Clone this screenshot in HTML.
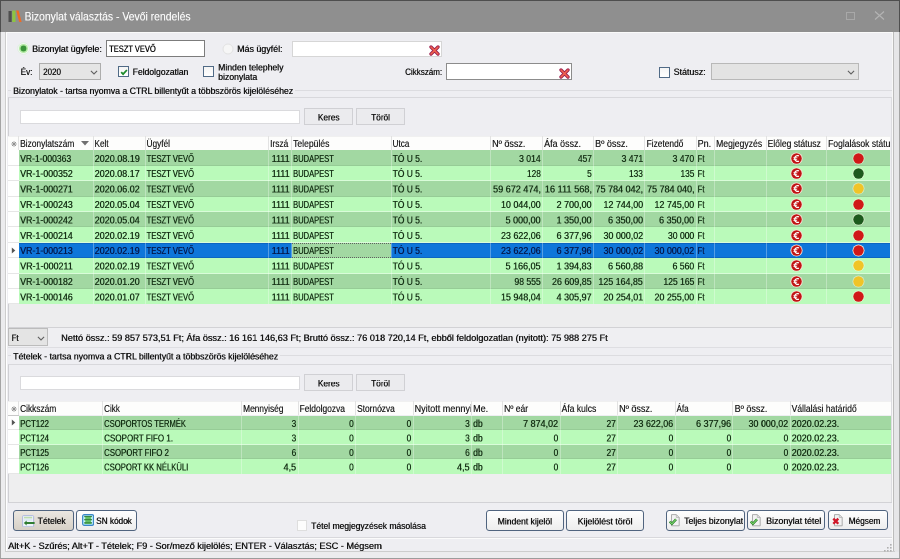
<!DOCTYPE html><html><head><meta charset="utf-8"><style>
*{box-sizing:border-box;margin:0;padding:0}
html,body{width:900px;height:559px;overflow:hidden;background:#eeeef2;font-family:"Liberation Sans", sans-serif;color:#161616}
.ab{position:absolute}
.t{position:absolute;white-space:pre;line-height:1;text-shadow:0.85px 0 0 currentColor}
.cl{position:absolute;overflow:hidden}
</style></head><body>
<div class="ab" style="left:0px;top:0px;width:900px;height:559px;background:#ececee;border:1px solid #a4a4a4;border-top:none"></div>
<div class="ab" style="left:5px;top:32px;width:1px;height:520px;background:#cdcdcd"></div>
<div class="ab" style="left:893px;top:32px;width:1px;height:520px;background:#bcbcbc"></div>
<div class="ab" style="left:894px;top:32px;width:5px;height:520px;background:#e6e6e8"></div>
<div class="ab" style="left:5px;top:551px;width:890px;height:1px;background:#cdcdcd"></div>
<div class="ab" style="left:0px;top:558px;width:900px;height:1px;background:#9c9c9c"></div>
<div class="ab" style="left:0px;top:0px;width:900px;height:32px;background:#8f8f8f;border-top:1px solid #4e4e4e;border-left:1px solid #4e4e4e;border-right:1px solid #4e4e4e"></div>
<svg class="ab" style="left:8px;top:10px" width="14" height="13" viewBox="0 0 14 13"><rect x="0.5" y="1" width="3.2" height="11" fill="#4f4f4f"/><rect x="4.3" y="0.5" width="3.2" height="11.5" fill="#8dc63f"/><path d="M8.2 0.5 L10.6 0.5 L13.6 12 L11.2 12 Z" fill="#f26a22"/></svg>
<div class="ab" style="left:846px;top:11.7px;width:9.2px;height:8.2px;border:1px solid #a8a8a8"></div>
<svg class="ab" style="left:873.5px;top:11px" width="11" height="9" viewBox="0 0 11 9"><path d="M1 0.5L10 8.5M10 0.5L1 8.5" stroke="#b4b4b4" stroke-width="1.1"/></svg>
<div class="ab" style="left:6px;top:32px;width:887px;height:519px;background:#eeeef2;border-top:1px solid #fafafa;border-left:1px solid #fff;border-right:1px solid #f8f8f8"></div>
<svg class="ab" style="left:16.5px;top:41.6px" width="13" height="13" viewBox="0 0 13 13"><circle cx="6.5" cy="6.5" r="5.8" fill="#f2f8f2" stroke="#dcefdc" stroke-width="0.8"/><circle cx="6.5" cy="6.5" r="4.5" fill="#b2eaa2"/><circle cx="6.5" cy="6.5" r="2.9" fill="#3a943a"/></svg>
<div class="ab" style="left:106px;top:40px;width:99px;height:17px;background:#fff;border:1px solid #7c7c7c"></div>
<svg class="ab" style="left:222.2px;top:42.9px" width="12" height="12" viewBox="0 0 12 12"><circle cx="6" cy="6" r="5" fill="#f6f6f6" stroke="#e2e2e2" stroke-width="1"/></svg>
<div class="ab" style="left:292.4px;top:40.8px;width:149.2px;height:16.7px;background:#fff;border:1px solid #d6d6d6"></div>
<svg class="ab" style="left:428.8px;top:44.6px" width="11" height="11" viewBox="0 0 11 11"><path d="M2 2L9 9M9 2L2 9" stroke="#9a1e50" stroke-width="3.3" stroke-linecap="round"/><path d="M2 2L9 9M9 2L2 9" stroke="#f2644c" stroke-width="1.6" stroke-linecap="round"/></svg>
<div class="ab" style="left:39px;top:63.2px;width:62px;height:17px;background:#e5e5e5;border:1px solid #adadad"></div>
<svg class="ab" style="left:90.2px;top:70px" width="8" height="5" viewBox="0 0 8 5"><path d="M0.9 0.8L4 3.9L7.1 0.8" fill="none" stroke="#606060" stroke-width="1.05"/></svg>
<div class="ab" style="left:118.2px;top:66.3px;width:10.6px;height:10.6px;background:linear-gradient(#f4f4f4,#ffffff);border:1.2px solid #506a86"></div>
<svg class="ab" style="left:119.8px;top:68.1px" width="8" height="8" viewBox="0 0 8 8"><path d="M1.2 4.2L3.1 6.1L6.9 2" fill="none" stroke="#1e8c2c" stroke-width="1.8"/></svg>
<div class="ab" style="left:203.3px;top:66.3px;width:10.6px;height:10.6px;background:linear-gradient(#f4f4f4,#ffffff);border:1.2px solid #506a86"></div>
<div class="ab" style="left:446px;top:63.4px;width:125.8px;height:16.4px;background:#fff;border:1px solid #8c8c8c"></div>
<svg class="ab" style="left:558.5px;top:67.8px" width="11" height="11" viewBox="0 0 11 11"><path d="M2 2L9 9M9 2L2 9" stroke="#9a1e50" stroke-width="3.3" stroke-linecap="round"/><path d="M2 2L9 9M9 2L2 9" stroke="#f2644c" stroke-width="1.6" stroke-linecap="round"/></svg>
<div class="ab" style="left:659px;top:67px;width:10.6px;height:10.6px;background:linear-gradient(#f4f4f4,#ffffff);border:1.2px solid #506a86"></div>
<div class="ab" style="left:711px;top:63.3px;width:147.8px;height:16.8px;background:#e3e3e3;border:1px solid #b8b8b8"></div>
<svg class="ab" style="left:847px;top:70.2px" width="8" height="5" viewBox="0 0 8 5"><path d="M0.9 0.8L4 3.9L7.1 0.8" fill="none" stroke="#606060" stroke-width="1.05"/></svg>
<div class="ab" style="left:7.5px;top:96.5px;width:884px;height:231px;border-top:1px solid #d8d8dc;border-left:1px solid #cfcfd3;border-right:1px solid #dcdce0"></div>
<div class="ab" style="left:294.5px;top:90px;width:597.5px;height:1px;background:#dcdce0"></div>
<div class="ab" style="left:8px;top:90px;width:3px;height:1px;background:#dcdce0"></div>
<div class="ab" style="left:19.5px;top:109.6px;width:280px;height:14.9px;background:#fff;border:1px solid #dadadd"></div>
<div class="ab" style="left:304.2px;top:108.2px;width:48.4px;height:17.1px;background:#ebebee;border:1px solid #d0d0d4"></div>
<div class="ab" style="left:356.2px;top:108.2px;width:48.7px;height:17.1px;background:#ebebee;border:1px solid #d0d0d4"></div>
<div class="ab" style="left:8px;top:135.5px;width:882px;height:14.900000000000006px;background:#fdfdfc;border-top:1px solid #f0f0f0"></div>
<div class="ab" style="left:18.0px;top:135.5px;width:1px;height:14.900000000000006px;background:#e2e2e2"></div>
<div class="ab" style="left:92.5px;top:135.5px;width:1px;height:14.900000000000006px;background:#e2e2e2"></div>
<div class="ab" style="left:144.5px;top:135.5px;width:1px;height:14.900000000000006px;background:#e2e2e2"></div>
<div class="ab" style="left:267.8px;top:135.5px;width:1px;height:14.900000000000006px;background:#e2e2e2"></div>
<div class="ab" style="left:291.0px;top:135.5px;width:1px;height:14.900000000000006px;background:#e2e2e2"></div>
<div class="ab" style="left:390.5px;top:135.5px;width:1px;height:14.900000000000006px;background:#e2e2e2"></div>
<div class="ab" style="left:490.0px;top:135.5px;width:1px;height:14.900000000000006px;background:#e2e2e2"></div>
<div class="ab" style="left:542.0px;top:135.5px;width:1px;height:14.900000000000006px;background:#e2e2e2"></div>
<div class="ab" style="left:593.0px;top:135.5px;width:1px;height:14.900000000000006px;background:#e2e2e2"></div>
<div class="ab" style="left:644.2px;top:135.5px;width:1px;height:14.900000000000006px;background:#e2e2e2"></div>
<div class="ab" style="left:695.5px;top:135.5px;width:1px;height:14.900000000000006px;background:#e2e2e2"></div>
<div class="ab" style="left:714.0px;top:135.5px;width:1px;height:14.900000000000006px;background:#e2e2e2"></div>
<div class="ab" style="left:765.5px;top:135.5px;width:1px;height:14.900000000000006px;background:#e2e2e2"></div>
<div class="ab" style="left:826.0px;top:135.5px;width:1px;height:14.900000000000006px;background:#e2e2e2"></div>
<svg class="ab" style="left:10.5px;top:140.5px" width="6" height="6" viewBox="0 0 6 6"><g stroke="#8c8c8c" stroke-width="0.9"><path d="M3 0.3V5.7M0.3 3H5.7M1 1L5 5M5 1L1 5"/></g></svg>
<div class="ab" style="left:8px;top:149.9px;width:10.5px;height:1px;background:#c8c8c8"></div>
<svg class="ab" style="left:81px;top:141px" width="8" height="5" viewBox="0 0 8 5"><path d="M0 0L8 0L4 4.5Z" fill="#707070"/></svg>
<div class="ab" style="left:8px;top:150.4px;width:10.5px;height:15.4px;background:#fff;border-bottom:1px solid #e6e6e6"></div>
<div class="ab" style="left:18.5px;top:150.4px;width:871.5px;height:15.4px;background:#a2d8a2"></div>
<div class="ab" style="left:18.5px;top:164.8px;width:871.5px;height:1px;background:rgba(0,50,0,0.07)"></div>
<div class="ab" style="left:92.5px;top:150.4px;width:1px;height:15.4px;background:rgba(255,255,255,0.3)"></div>
<div class="ab" style="left:144.5px;top:150.4px;width:1px;height:15.4px;background:rgba(255,255,255,0.3)"></div>
<div class="ab" style="left:267.8px;top:150.4px;width:1px;height:15.4px;background:rgba(255,255,255,0.3)"></div>
<div class="ab" style="left:291.0px;top:150.4px;width:1px;height:15.4px;background:rgba(255,255,255,0.3)"></div>
<div class="ab" style="left:390.5px;top:150.4px;width:1px;height:15.4px;background:rgba(255,255,255,0.3)"></div>
<div class="ab" style="left:490.0px;top:150.4px;width:1px;height:15.4px;background:rgba(255,255,255,0.3)"></div>
<div class="ab" style="left:542.0px;top:150.4px;width:1px;height:15.4px;background:rgba(255,255,255,0.3)"></div>
<div class="ab" style="left:593.0px;top:150.4px;width:1px;height:15.4px;background:rgba(255,255,255,0.3)"></div>
<div class="ab" style="left:644.2px;top:150.4px;width:1px;height:15.4px;background:rgba(255,255,255,0.3)"></div>
<div class="ab" style="left:695.5px;top:150.4px;width:1px;height:15.4px;background:rgba(255,255,255,0.3)"></div>
<div class="ab" style="left:714.0px;top:150.4px;width:1px;height:15.4px;background:rgba(255,255,255,0.3)"></div>
<div class="ab" style="left:765.5px;top:150.4px;width:1px;height:15.4px;background:rgba(255,255,255,0.3)"></div>
<div class="ab" style="left:826.0px;top:150.4px;width:1px;height:15.4px;background:rgba(255,255,255,0.3)"></div>
<svg class="ab" style="left:789.5px;top:151.6px" width="13" height="13" viewBox="0 0 13 13"><circle cx="6.5" cy="6.5" r="6.1" fill="#f6e2d6"/><circle cx="6.5" cy="6.5" r="5.2" fill="#c01414"/><path d="M8.9 3.9A2.9 2.9 0 1 0 8.9 9.1" fill="none" stroke="#fff" stroke-width="1.3"/><path d="M3.4 5.7H7.4M3.4 7.4H7.1" stroke="#fff" stroke-width="0.8"/></svg>
<svg class="ab" style="left:852.0px;top:151.6px" width="13" height="13" viewBox="0 0 13 13"><circle cx="6.5" cy="6.5" r="6" fill="rgba(255,250,230,0.55)"/><circle cx="6.5" cy="6.5" r="5.2" fill="#d01818"/></svg>
<div class="ab" style="left:8px;top:165.8px;width:10.5px;height:15.4px;background:#fff;border-bottom:1px solid #e6e6e6"></div>
<div class="ab" style="left:18.5px;top:165.8px;width:871.5px;height:15.4px;background:#bafaba"></div>
<div class="ab" style="left:18.5px;top:180.20000000000002px;width:871.5px;height:1px;background:rgba(255,255,255,0.45)"></div>
<div class="ab" style="left:92.5px;top:165.8px;width:1px;height:15.4px;background:rgba(255,255,255,0.3)"></div>
<div class="ab" style="left:144.5px;top:165.8px;width:1px;height:15.4px;background:rgba(255,255,255,0.3)"></div>
<div class="ab" style="left:267.8px;top:165.8px;width:1px;height:15.4px;background:rgba(255,255,255,0.3)"></div>
<div class="ab" style="left:291.0px;top:165.8px;width:1px;height:15.4px;background:rgba(255,255,255,0.3)"></div>
<div class="ab" style="left:390.5px;top:165.8px;width:1px;height:15.4px;background:rgba(255,255,255,0.3)"></div>
<div class="ab" style="left:490.0px;top:165.8px;width:1px;height:15.4px;background:rgba(255,255,255,0.3)"></div>
<div class="ab" style="left:542.0px;top:165.8px;width:1px;height:15.4px;background:rgba(255,255,255,0.3)"></div>
<div class="ab" style="left:593.0px;top:165.8px;width:1px;height:15.4px;background:rgba(255,255,255,0.3)"></div>
<div class="ab" style="left:644.2px;top:165.8px;width:1px;height:15.4px;background:rgba(255,255,255,0.3)"></div>
<div class="ab" style="left:695.5px;top:165.8px;width:1px;height:15.4px;background:rgba(255,255,255,0.3)"></div>
<div class="ab" style="left:714.0px;top:165.8px;width:1px;height:15.4px;background:rgba(255,255,255,0.3)"></div>
<div class="ab" style="left:765.5px;top:165.8px;width:1px;height:15.4px;background:rgba(255,255,255,0.3)"></div>
<div class="ab" style="left:826.0px;top:165.8px;width:1px;height:15.4px;background:rgba(255,255,255,0.3)"></div>
<svg class="ab" style="left:789.5px;top:167.0px" width="13" height="13" viewBox="0 0 13 13"><circle cx="6.5" cy="6.5" r="6.1" fill="#f6e2d6"/><circle cx="6.5" cy="6.5" r="5.2" fill="#c01414"/><path d="M8.9 3.9A2.9 2.9 0 1 0 8.9 9.1" fill="none" stroke="#fff" stroke-width="1.3"/><path d="M3.4 5.7H7.4M3.4 7.4H7.1" stroke="#fff" stroke-width="0.8"/></svg>
<svg class="ab" style="left:852.0px;top:167.0px" width="13" height="13" viewBox="0 0 13 13"><circle cx="6.5" cy="6.5" r="6" fill="rgba(255,250,230,0.55)"/><circle cx="6.5" cy="6.5" r="5.2" fill="#1d5a1d"/></svg>
<div class="ab" style="left:8px;top:181.20000000000002px;width:10.5px;height:15.4px;background:#fff;border-bottom:1px solid #e6e6e6"></div>
<div class="ab" style="left:18.5px;top:181.20000000000002px;width:871.5px;height:15.4px;background:#a2d8a2"></div>
<div class="ab" style="left:18.5px;top:195.60000000000002px;width:871.5px;height:1px;background:rgba(0,50,0,0.07)"></div>
<div class="ab" style="left:92.5px;top:181.20000000000002px;width:1px;height:15.4px;background:rgba(255,255,255,0.3)"></div>
<div class="ab" style="left:144.5px;top:181.20000000000002px;width:1px;height:15.4px;background:rgba(255,255,255,0.3)"></div>
<div class="ab" style="left:267.8px;top:181.20000000000002px;width:1px;height:15.4px;background:rgba(255,255,255,0.3)"></div>
<div class="ab" style="left:291.0px;top:181.20000000000002px;width:1px;height:15.4px;background:rgba(255,255,255,0.3)"></div>
<div class="ab" style="left:390.5px;top:181.20000000000002px;width:1px;height:15.4px;background:rgba(255,255,255,0.3)"></div>
<div class="ab" style="left:490.0px;top:181.20000000000002px;width:1px;height:15.4px;background:rgba(255,255,255,0.3)"></div>
<div class="ab" style="left:542.0px;top:181.20000000000002px;width:1px;height:15.4px;background:rgba(255,255,255,0.3)"></div>
<div class="ab" style="left:593.0px;top:181.20000000000002px;width:1px;height:15.4px;background:rgba(255,255,255,0.3)"></div>
<div class="ab" style="left:644.2px;top:181.20000000000002px;width:1px;height:15.4px;background:rgba(255,255,255,0.3)"></div>
<div class="ab" style="left:695.5px;top:181.20000000000002px;width:1px;height:15.4px;background:rgba(255,255,255,0.3)"></div>
<div class="ab" style="left:714.0px;top:181.20000000000002px;width:1px;height:15.4px;background:rgba(255,255,255,0.3)"></div>
<div class="ab" style="left:765.5px;top:181.20000000000002px;width:1px;height:15.4px;background:rgba(255,255,255,0.3)"></div>
<div class="ab" style="left:826.0px;top:181.20000000000002px;width:1px;height:15.4px;background:rgba(255,255,255,0.3)"></div>
<svg class="ab" style="left:789.5px;top:182.4px" width="13" height="13" viewBox="0 0 13 13"><circle cx="6.5" cy="6.5" r="6.1" fill="#f6e2d6"/><circle cx="6.5" cy="6.5" r="5.2" fill="#c01414"/><path d="M8.9 3.9A2.9 2.9 0 1 0 8.9 9.1" fill="none" stroke="#fff" stroke-width="1.3"/><path d="M3.4 5.7H7.4M3.4 7.4H7.1" stroke="#fff" stroke-width="0.8"/></svg>
<svg class="ab" style="left:852.0px;top:182.4px" width="13" height="13" viewBox="0 0 13 13"><circle cx="6.5" cy="6.5" r="6" fill="rgba(255,250,230,0.55)"/><circle cx="6.5" cy="6.5" r="5.2" fill="#f0c428"/></svg>
<div class="ab" style="left:8px;top:196.60000000000002px;width:10.5px;height:15.4px;background:#fff;border-bottom:1px solid #e6e6e6"></div>
<div class="ab" style="left:18.5px;top:196.60000000000002px;width:871.5px;height:15.4px;background:#bafaba"></div>
<div class="ab" style="left:18.5px;top:211.00000000000003px;width:871.5px;height:1px;background:rgba(255,255,255,0.45)"></div>
<div class="ab" style="left:92.5px;top:196.60000000000002px;width:1px;height:15.4px;background:rgba(255,255,255,0.3)"></div>
<div class="ab" style="left:144.5px;top:196.60000000000002px;width:1px;height:15.4px;background:rgba(255,255,255,0.3)"></div>
<div class="ab" style="left:267.8px;top:196.60000000000002px;width:1px;height:15.4px;background:rgba(255,255,255,0.3)"></div>
<div class="ab" style="left:291.0px;top:196.60000000000002px;width:1px;height:15.4px;background:rgba(255,255,255,0.3)"></div>
<div class="ab" style="left:390.5px;top:196.60000000000002px;width:1px;height:15.4px;background:rgba(255,255,255,0.3)"></div>
<div class="ab" style="left:490.0px;top:196.60000000000002px;width:1px;height:15.4px;background:rgba(255,255,255,0.3)"></div>
<div class="ab" style="left:542.0px;top:196.60000000000002px;width:1px;height:15.4px;background:rgba(255,255,255,0.3)"></div>
<div class="ab" style="left:593.0px;top:196.60000000000002px;width:1px;height:15.4px;background:rgba(255,255,255,0.3)"></div>
<div class="ab" style="left:644.2px;top:196.60000000000002px;width:1px;height:15.4px;background:rgba(255,255,255,0.3)"></div>
<div class="ab" style="left:695.5px;top:196.60000000000002px;width:1px;height:15.4px;background:rgba(255,255,255,0.3)"></div>
<div class="ab" style="left:714.0px;top:196.60000000000002px;width:1px;height:15.4px;background:rgba(255,255,255,0.3)"></div>
<div class="ab" style="left:765.5px;top:196.60000000000002px;width:1px;height:15.4px;background:rgba(255,255,255,0.3)"></div>
<div class="ab" style="left:826.0px;top:196.60000000000002px;width:1px;height:15.4px;background:rgba(255,255,255,0.3)"></div>
<svg class="ab" style="left:789.5px;top:197.8px" width="13" height="13" viewBox="0 0 13 13"><circle cx="6.5" cy="6.5" r="6.1" fill="#f6e2d6"/><circle cx="6.5" cy="6.5" r="5.2" fill="#c01414"/><path d="M8.9 3.9A2.9 2.9 0 1 0 8.9 9.1" fill="none" stroke="#fff" stroke-width="1.3"/><path d="M3.4 5.7H7.4M3.4 7.4H7.1" stroke="#fff" stroke-width="0.8"/></svg>
<svg class="ab" style="left:852.0px;top:197.8px" width="13" height="13" viewBox="0 0 13 13"><circle cx="6.5" cy="6.5" r="6" fill="rgba(255,250,230,0.55)"/><circle cx="6.5" cy="6.5" r="5.2" fill="#d01818"/></svg>
<div class="ab" style="left:8px;top:212.0px;width:10.5px;height:15.4px;background:#fff;border-bottom:1px solid #e6e6e6"></div>
<div class="ab" style="left:18.5px;top:212.0px;width:871.5px;height:15.4px;background:#a2d8a2"></div>
<div class="ab" style="left:18.5px;top:226.4px;width:871.5px;height:1px;background:rgba(0,50,0,0.07)"></div>
<div class="ab" style="left:92.5px;top:212.0px;width:1px;height:15.4px;background:rgba(255,255,255,0.3)"></div>
<div class="ab" style="left:144.5px;top:212.0px;width:1px;height:15.4px;background:rgba(255,255,255,0.3)"></div>
<div class="ab" style="left:267.8px;top:212.0px;width:1px;height:15.4px;background:rgba(255,255,255,0.3)"></div>
<div class="ab" style="left:291.0px;top:212.0px;width:1px;height:15.4px;background:rgba(255,255,255,0.3)"></div>
<div class="ab" style="left:390.5px;top:212.0px;width:1px;height:15.4px;background:rgba(255,255,255,0.3)"></div>
<div class="ab" style="left:490.0px;top:212.0px;width:1px;height:15.4px;background:rgba(255,255,255,0.3)"></div>
<div class="ab" style="left:542.0px;top:212.0px;width:1px;height:15.4px;background:rgba(255,255,255,0.3)"></div>
<div class="ab" style="left:593.0px;top:212.0px;width:1px;height:15.4px;background:rgba(255,255,255,0.3)"></div>
<div class="ab" style="left:644.2px;top:212.0px;width:1px;height:15.4px;background:rgba(255,255,255,0.3)"></div>
<div class="ab" style="left:695.5px;top:212.0px;width:1px;height:15.4px;background:rgba(255,255,255,0.3)"></div>
<div class="ab" style="left:714.0px;top:212.0px;width:1px;height:15.4px;background:rgba(255,255,255,0.3)"></div>
<div class="ab" style="left:765.5px;top:212.0px;width:1px;height:15.4px;background:rgba(255,255,255,0.3)"></div>
<div class="ab" style="left:826.0px;top:212.0px;width:1px;height:15.4px;background:rgba(255,255,255,0.3)"></div>
<svg class="ab" style="left:789.5px;top:213.2px" width="13" height="13" viewBox="0 0 13 13"><circle cx="6.5" cy="6.5" r="6.1" fill="#f6e2d6"/><circle cx="6.5" cy="6.5" r="5.2" fill="#c01414"/><path d="M8.9 3.9A2.9 2.9 0 1 0 8.9 9.1" fill="none" stroke="#fff" stroke-width="1.3"/><path d="M3.4 5.7H7.4M3.4 7.4H7.1" stroke="#fff" stroke-width="0.8"/></svg>
<svg class="ab" style="left:852.0px;top:213.2px" width="13" height="13" viewBox="0 0 13 13"><circle cx="6.5" cy="6.5" r="6" fill="rgba(255,250,230,0.55)"/><circle cx="6.5" cy="6.5" r="5.2" fill="#1d5a1d"/></svg>
<div class="ab" style="left:8px;top:227.4px;width:10.5px;height:15.4px;background:#fff;border-bottom:1px solid #e6e6e6"></div>
<div class="ab" style="left:18.5px;top:227.4px;width:871.5px;height:15.4px;background:#bafaba"></div>
<div class="ab" style="left:18.5px;top:241.8px;width:871.5px;height:1px;background:rgba(255,255,255,0.45)"></div>
<div class="ab" style="left:92.5px;top:227.4px;width:1px;height:15.4px;background:rgba(255,255,255,0.3)"></div>
<div class="ab" style="left:144.5px;top:227.4px;width:1px;height:15.4px;background:rgba(255,255,255,0.3)"></div>
<div class="ab" style="left:267.8px;top:227.4px;width:1px;height:15.4px;background:rgba(255,255,255,0.3)"></div>
<div class="ab" style="left:291.0px;top:227.4px;width:1px;height:15.4px;background:rgba(255,255,255,0.3)"></div>
<div class="ab" style="left:390.5px;top:227.4px;width:1px;height:15.4px;background:rgba(255,255,255,0.3)"></div>
<div class="ab" style="left:490.0px;top:227.4px;width:1px;height:15.4px;background:rgba(255,255,255,0.3)"></div>
<div class="ab" style="left:542.0px;top:227.4px;width:1px;height:15.4px;background:rgba(255,255,255,0.3)"></div>
<div class="ab" style="left:593.0px;top:227.4px;width:1px;height:15.4px;background:rgba(255,255,255,0.3)"></div>
<div class="ab" style="left:644.2px;top:227.4px;width:1px;height:15.4px;background:rgba(255,255,255,0.3)"></div>
<div class="ab" style="left:695.5px;top:227.4px;width:1px;height:15.4px;background:rgba(255,255,255,0.3)"></div>
<div class="ab" style="left:714.0px;top:227.4px;width:1px;height:15.4px;background:rgba(255,255,255,0.3)"></div>
<div class="ab" style="left:765.5px;top:227.4px;width:1px;height:15.4px;background:rgba(255,255,255,0.3)"></div>
<div class="ab" style="left:826.0px;top:227.4px;width:1px;height:15.4px;background:rgba(255,255,255,0.3)"></div>
<svg class="ab" style="left:789.5px;top:228.6px" width="13" height="13" viewBox="0 0 13 13"><circle cx="6.5" cy="6.5" r="6.1" fill="#f6e2d6"/><circle cx="6.5" cy="6.5" r="5.2" fill="#c01414"/><path d="M8.9 3.9A2.9 2.9 0 1 0 8.9 9.1" fill="none" stroke="#fff" stroke-width="1.3"/><path d="M3.4 5.7H7.4M3.4 7.4H7.1" stroke="#fff" stroke-width="0.8"/></svg>
<svg class="ab" style="left:852.0px;top:228.6px" width="13" height="13" viewBox="0 0 13 13"><circle cx="6.5" cy="6.5" r="6" fill="rgba(255,250,230,0.55)"/><circle cx="6.5" cy="6.5" r="5.2" fill="#d01818"/></svg>
<div class="ab" style="left:8px;top:242.8px;width:10.5px;height:15.4px;background:#fff;border-bottom:1px solid #e6e6e6"></div>
<div class="ab" style="left:18.5px;top:242.8px;width:871.5px;height:15.4px;background:#0e76da"></div>
<div class="ab" style="left:18.5px;top:242.8px;width:871.5px;height:1px;background:rgba(0,30,90,0.18)"></div>
<div class="ab" style="left:18.5px;top:256.7px;width:871.5px;height:1px;background:rgba(0,30,90,0.18)"></div>
<div class="ab" style="left:291.5px;top:243.20000000000002px;width:99.5px;height:14.6px;background:#a2d8a2;border-top:1px dotted #606060;border-bottom:1px dotted #606060"></div>
<div class="ab" style="left:92.5px;top:242.8px;width:1px;height:15.4px;background:rgba(255,255,255,0.3)"></div>
<div class="ab" style="left:144.5px;top:242.8px;width:1px;height:15.4px;background:rgba(255,255,255,0.3)"></div>
<div class="ab" style="left:267.8px;top:242.8px;width:1px;height:15.4px;background:rgba(255,255,255,0.3)"></div>
<div class="ab" style="left:291.0px;top:242.8px;width:1px;height:15.4px;background:rgba(255,255,255,0.3)"></div>
<div class="ab" style="left:390.5px;top:242.8px;width:1px;height:15.4px;background:rgba(255,255,255,0.3)"></div>
<div class="ab" style="left:490.0px;top:242.8px;width:1px;height:15.4px;background:rgba(255,255,255,0.3)"></div>
<div class="ab" style="left:542.0px;top:242.8px;width:1px;height:15.4px;background:rgba(255,255,255,0.3)"></div>
<div class="ab" style="left:593.0px;top:242.8px;width:1px;height:15.4px;background:rgba(255,255,255,0.3)"></div>
<div class="ab" style="left:644.2px;top:242.8px;width:1px;height:15.4px;background:rgba(255,255,255,0.3)"></div>
<div class="ab" style="left:695.5px;top:242.8px;width:1px;height:15.4px;background:rgba(255,255,255,0.3)"></div>
<div class="ab" style="left:714.0px;top:242.8px;width:1px;height:15.4px;background:rgba(255,255,255,0.3)"></div>
<div class="ab" style="left:765.5px;top:242.8px;width:1px;height:15.4px;background:rgba(255,255,255,0.3)"></div>
<div class="ab" style="left:826.0px;top:242.8px;width:1px;height:15.4px;background:rgba(255,255,255,0.3)"></div>
<svg class="ab" style="left:789.5px;top:244.0px" width="13" height="13" viewBox="0 0 13 13"><circle cx="6.5" cy="6.5" r="6.1" fill="#f6e2d6"/><circle cx="6.5" cy="6.5" r="5.2" fill="#c01414"/><path d="M8.9 3.9A2.9 2.9 0 1 0 8.9 9.1" fill="none" stroke="#fff" stroke-width="1.3"/><path d="M3.4 5.7H7.4M3.4 7.4H7.1" stroke="#fff" stroke-width="0.8"/></svg>
<svg class="ab" style="left:852.0px;top:244.0px" width="13" height="13" viewBox="0 0 13 13"><circle cx="6.5" cy="6.5" r="6" fill="#f4f0e0"/><circle cx="6.5" cy="6.5" r="5.2" fill="#d01818"/></svg>
<div class="ab" style="left:8px;top:258.2px;width:10.5px;height:15.4px;background:#fff;border-bottom:1px solid #e6e6e6"></div>
<div class="ab" style="left:18.5px;top:258.2px;width:871.5px;height:15.4px;background:#bafaba"></div>
<div class="ab" style="left:18.5px;top:272.59999999999997px;width:871.5px;height:1px;background:rgba(255,255,255,0.45)"></div>
<div class="ab" style="left:92.5px;top:258.2px;width:1px;height:15.4px;background:rgba(255,255,255,0.3)"></div>
<div class="ab" style="left:144.5px;top:258.2px;width:1px;height:15.4px;background:rgba(255,255,255,0.3)"></div>
<div class="ab" style="left:267.8px;top:258.2px;width:1px;height:15.4px;background:rgba(255,255,255,0.3)"></div>
<div class="ab" style="left:291.0px;top:258.2px;width:1px;height:15.4px;background:rgba(255,255,255,0.3)"></div>
<div class="ab" style="left:390.5px;top:258.2px;width:1px;height:15.4px;background:rgba(255,255,255,0.3)"></div>
<div class="ab" style="left:490.0px;top:258.2px;width:1px;height:15.4px;background:rgba(255,255,255,0.3)"></div>
<div class="ab" style="left:542.0px;top:258.2px;width:1px;height:15.4px;background:rgba(255,255,255,0.3)"></div>
<div class="ab" style="left:593.0px;top:258.2px;width:1px;height:15.4px;background:rgba(255,255,255,0.3)"></div>
<div class="ab" style="left:644.2px;top:258.2px;width:1px;height:15.4px;background:rgba(255,255,255,0.3)"></div>
<div class="ab" style="left:695.5px;top:258.2px;width:1px;height:15.4px;background:rgba(255,255,255,0.3)"></div>
<div class="ab" style="left:714.0px;top:258.2px;width:1px;height:15.4px;background:rgba(255,255,255,0.3)"></div>
<div class="ab" style="left:765.5px;top:258.2px;width:1px;height:15.4px;background:rgba(255,255,255,0.3)"></div>
<div class="ab" style="left:826.0px;top:258.2px;width:1px;height:15.4px;background:rgba(255,255,255,0.3)"></div>
<svg class="ab" style="left:789.5px;top:259.4px" width="13" height="13" viewBox="0 0 13 13"><circle cx="6.5" cy="6.5" r="6.1" fill="#f6e2d6"/><circle cx="6.5" cy="6.5" r="5.2" fill="#c01414"/><path d="M8.9 3.9A2.9 2.9 0 1 0 8.9 9.1" fill="none" stroke="#fff" stroke-width="1.3"/><path d="M3.4 5.7H7.4M3.4 7.4H7.1" stroke="#fff" stroke-width="0.8"/></svg>
<svg class="ab" style="left:852.0px;top:259.4px" width="13" height="13" viewBox="0 0 13 13"><circle cx="6.5" cy="6.5" r="6" fill="rgba(255,250,230,0.55)"/><circle cx="6.5" cy="6.5" r="5.2" fill="#f0c428"/></svg>
<div class="ab" style="left:8px;top:273.6px;width:10.5px;height:15.4px;background:#fff;border-bottom:1px solid #e6e6e6"></div>
<div class="ab" style="left:18.5px;top:273.6px;width:871.5px;height:15.4px;background:#a2d8a2"></div>
<div class="ab" style="left:18.5px;top:288.0px;width:871.5px;height:1px;background:rgba(0,50,0,0.07)"></div>
<div class="ab" style="left:92.5px;top:273.6px;width:1px;height:15.4px;background:rgba(255,255,255,0.3)"></div>
<div class="ab" style="left:144.5px;top:273.6px;width:1px;height:15.4px;background:rgba(255,255,255,0.3)"></div>
<div class="ab" style="left:267.8px;top:273.6px;width:1px;height:15.4px;background:rgba(255,255,255,0.3)"></div>
<div class="ab" style="left:291.0px;top:273.6px;width:1px;height:15.4px;background:rgba(255,255,255,0.3)"></div>
<div class="ab" style="left:390.5px;top:273.6px;width:1px;height:15.4px;background:rgba(255,255,255,0.3)"></div>
<div class="ab" style="left:490.0px;top:273.6px;width:1px;height:15.4px;background:rgba(255,255,255,0.3)"></div>
<div class="ab" style="left:542.0px;top:273.6px;width:1px;height:15.4px;background:rgba(255,255,255,0.3)"></div>
<div class="ab" style="left:593.0px;top:273.6px;width:1px;height:15.4px;background:rgba(255,255,255,0.3)"></div>
<div class="ab" style="left:644.2px;top:273.6px;width:1px;height:15.4px;background:rgba(255,255,255,0.3)"></div>
<div class="ab" style="left:695.5px;top:273.6px;width:1px;height:15.4px;background:rgba(255,255,255,0.3)"></div>
<div class="ab" style="left:714.0px;top:273.6px;width:1px;height:15.4px;background:rgba(255,255,255,0.3)"></div>
<div class="ab" style="left:765.5px;top:273.6px;width:1px;height:15.4px;background:rgba(255,255,255,0.3)"></div>
<div class="ab" style="left:826.0px;top:273.6px;width:1px;height:15.4px;background:rgba(255,255,255,0.3)"></div>
<svg class="ab" style="left:789.5px;top:274.8px" width="13" height="13" viewBox="0 0 13 13"><circle cx="6.5" cy="6.5" r="6.1" fill="#f6e2d6"/><circle cx="6.5" cy="6.5" r="5.2" fill="#c01414"/><path d="M8.9 3.9A2.9 2.9 0 1 0 8.9 9.1" fill="none" stroke="#fff" stroke-width="1.3"/><path d="M3.4 5.7H7.4M3.4 7.4H7.1" stroke="#fff" stroke-width="0.8"/></svg>
<svg class="ab" style="left:852.0px;top:274.8px" width="13" height="13" viewBox="0 0 13 13"><circle cx="6.5" cy="6.5" r="6" fill="rgba(255,250,230,0.55)"/><circle cx="6.5" cy="6.5" r="5.2" fill="#f0c428"/></svg>
<div class="ab" style="left:8px;top:289.0px;width:10.5px;height:15.4px;background:#fff;border-bottom:1px solid #e6e6e6"></div>
<div class="ab" style="left:18.5px;top:289.0px;width:871.5px;height:15.4px;background:#bafaba"></div>
<div class="ab" style="left:92.5px;top:289.0px;width:1px;height:15.4px;background:rgba(255,255,255,0.3)"></div>
<div class="ab" style="left:144.5px;top:289.0px;width:1px;height:15.4px;background:rgba(255,255,255,0.3)"></div>
<div class="ab" style="left:267.8px;top:289.0px;width:1px;height:15.4px;background:rgba(255,255,255,0.3)"></div>
<div class="ab" style="left:291.0px;top:289.0px;width:1px;height:15.4px;background:rgba(255,255,255,0.3)"></div>
<div class="ab" style="left:390.5px;top:289.0px;width:1px;height:15.4px;background:rgba(255,255,255,0.3)"></div>
<div class="ab" style="left:490.0px;top:289.0px;width:1px;height:15.4px;background:rgba(255,255,255,0.3)"></div>
<div class="ab" style="left:542.0px;top:289.0px;width:1px;height:15.4px;background:rgba(255,255,255,0.3)"></div>
<div class="ab" style="left:593.0px;top:289.0px;width:1px;height:15.4px;background:rgba(255,255,255,0.3)"></div>
<div class="ab" style="left:644.2px;top:289.0px;width:1px;height:15.4px;background:rgba(255,255,255,0.3)"></div>
<div class="ab" style="left:695.5px;top:289.0px;width:1px;height:15.4px;background:rgba(255,255,255,0.3)"></div>
<div class="ab" style="left:714.0px;top:289.0px;width:1px;height:15.4px;background:rgba(255,255,255,0.3)"></div>
<div class="ab" style="left:765.5px;top:289.0px;width:1px;height:15.4px;background:rgba(255,255,255,0.3)"></div>
<div class="ab" style="left:826.0px;top:289.0px;width:1px;height:15.4px;background:rgba(255,255,255,0.3)"></div>
<svg class="ab" style="left:789.5px;top:290.2px" width="13" height="13" viewBox="0 0 13 13"><circle cx="6.5" cy="6.5" r="6.1" fill="#f6e2d6"/><circle cx="6.5" cy="6.5" r="5.2" fill="#c01414"/><path d="M8.9 3.9A2.9 2.9 0 1 0 8.9 9.1" fill="none" stroke="#fff" stroke-width="1.3"/><path d="M3.4 5.7H7.4M3.4 7.4H7.1" stroke="#fff" stroke-width="0.8"/></svg>
<svg class="ab" style="left:852.0px;top:290.2px" width="13" height="13" viewBox="0 0 13 13"><circle cx="6.5" cy="6.5" r="6" fill="rgba(255,250,230,0.55)"/><circle cx="6.5" cy="6.5" r="5.2" fill="#d01818"/></svg>
<svg class="ab" style="left:11px;top:247.0px" width="5" height="7" viewBox="0 0 5 7"><path d="M0.8 0.5L4.3 3.5L0.8 6.5Z" fill="#555"/></svg>
<div class="ab" style="left:8.5px;top:304.4px;width:882.5px;height:22.6px;background:#ededee"></div>
<div class="ab" style="left:8px;top:327px;width:884px;height:1px;background:#d2d2d5"></div>
<div class="ab" style="left:8px;top:328px;width:884px;height:18.5px;background:#efeff2"></div>
<div class="ab" style="left:8px;top:346.5px;width:884px;height:1px;background:#dedee2"></div>
<div class="ab" style="left:8.3px;top:328px;width:39.5px;height:18.3px;background:#e4e4e4;border:1px solid #bcbcbc"></div>
<svg class="ab" style="left:37px;top:336px" width="8" height="5" viewBox="0 0 8 5"><path d="M0.9 0.8L4 3.9L7.1 0.8" fill="none" stroke="#606060" stroke-width="1.05"/></svg>
<div class="ab" style="left:7.5px;top:363.5px;width:884px;height:139px;border-top:1px solid #d8d8dc;border-left:1px solid #cfcfd3;border-right:1px solid #dcdce0"></div>
<div class="ab" style="left:280px;top:355px;width:612px;height:1px;background:#dcdce0"></div>
<div class="ab" style="left:8px;top:355px;width:3px;height:1px;background:#dcdce0"></div>
<div class="ab" style="left:19.5px;top:375.6px;width:280px;height:14px;background:#fff;border:1px solid #dadadd"></div>
<div class="ab" style="left:304.2px;top:373.9px;width:48.4px;height:17.1px;background:#ebebee;border:1px solid #d0d0d4"></div>
<div class="ab" style="left:356.2px;top:373.9px;width:48.7px;height:17.1px;background:#ebebee;border:1px solid #d0d0d4"></div>
<div class="ab" style="left:8px;top:400.8px;width:882.5px;height:14.699999999999989px;background:#fdfdfc;border-top:1px solid #f0f0f0"></div>
<div class="ab" style="left:18.0px;top:400.8px;width:1px;height:14.699999999999989px;background:#e2e2e2"></div>
<div class="ab" style="left:102.0px;top:400.8px;width:1px;height:14.699999999999989px;background:#e2e2e2"></div>
<div class="ab" style="left:241.0px;top:400.8px;width:1px;height:14.699999999999989px;background:#e2e2e2"></div>
<div class="ab" style="left:297.5px;top:400.8px;width:1px;height:14.699999999999989px;background:#e2e2e2"></div>
<div class="ab" style="left:355.0px;top:400.8px;width:1px;height:14.699999999999989px;background:#e2e2e2"></div>
<div class="ab" style="left:412.5px;top:400.8px;width:1px;height:14.699999999999989px;background:#e2e2e2"></div>
<div class="ab" style="left:471.0px;top:400.8px;width:1px;height:14.699999999999989px;background:#e2e2e2"></div>
<div class="ab" style="left:501.8px;top:400.8px;width:1px;height:14.699999999999989px;background:#e2e2e2"></div>
<div class="ab" style="left:559.5px;top:400.8px;width:1px;height:14.699999999999989px;background:#e2e2e2"></div>
<div class="ab" style="left:616.8px;top:400.8px;width:1px;height:14.699999999999989px;background:#e2e2e2"></div>
<div class="ab" style="left:674.5px;top:400.8px;width:1px;height:14.699999999999989px;background:#e2e2e2"></div>
<div class="ab" style="left:732.3px;top:400.8px;width:1px;height:14.699999999999989px;background:#e2e2e2"></div>
<div class="ab" style="left:789.5px;top:400.8px;width:1px;height:14.699999999999989px;background:#e2e2e2"></div>
<svg class="ab" style="left:10.5px;top:405.5px" width="6" height="6" viewBox="0 0 6 6"><g stroke="#8c8c8c" stroke-width="0.9"><path d="M3 0.3V5.7M0.3 3H5.7M1 1L5 5M5 1L1 5"/></g></svg>
<div class="ab" style="left:8px;top:415px;width:10.5px;height:1px;background:#c8c8c8"></div>
<div class="ab" style="left:8px;top:415.5px;width:10.5px;height:14.6px;background:#fff;border-bottom:1px solid #e6e6e6"></div>
<div class="ab" style="left:18.5px;top:415.5px;width:872px;height:14.6px;background:#a2d8a2"></div>
<div class="ab" style="left:18.5px;top:429.1px;width:872px;height:1px;background:rgba(0,50,0,0.07)"></div>
<div class="ab" style="left:102.0px;top:415.5px;width:1px;height:14.6px;background:rgba(255,255,255,0.3)"></div>
<div class="ab" style="left:241.0px;top:415.5px;width:1px;height:14.6px;background:rgba(255,255,255,0.3)"></div>
<div class="ab" style="left:297.5px;top:415.5px;width:1px;height:14.6px;background:rgba(255,255,255,0.3)"></div>
<div class="ab" style="left:355.0px;top:415.5px;width:1px;height:14.6px;background:rgba(255,255,255,0.3)"></div>
<div class="ab" style="left:412.5px;top:415.5px;width:1px;height:14.6px;background:rgba(255,255,255,0.3)"></div>
<div class="ab" style="left:471.0px;top:415.5px;width:1px;height:14.6px;background:rgba(255,255,255,0.3)"></div>
<div class="ab" style="left:501.8px;top:415.5px;width:1px;height:14.6px;background:rgba(255,255,255,0.3)"></div>
<div class="ab" style="left:559.5px;top:415.5px;width:1px;height:14.6px;background:rgba(255,255,255,0.3)"></div>
<div class="ab" style="left:616.8px;top:415.5px;width:1px;height:14.6px;background:rgba(255,255,255,0.3)"></div>
<div class="ab" style="left:674.5px;top:415.5px;width:1px;height:14.6px;background:rgba(255,255,255,0.3)"></div>
<div class="ab" style="left:732.3px;top:415.5px;width:1px;height:14.6px;background:rgba(255,255,255,0.3)"></div>
<div class="ab" style="left:789.5px;top:415.5px;width:1px;height:14.6px;background:rgba(255,255,255,0.3)"></div>
<div class="ab" style="left:8px;top:430.1px;width:10.5px;height:14.6px;background:#fff;border-bottom:1px solid #e6e6e6"></div>
<div class="ab" style="left:18.5px;top:430.1px;width:872px;height:14.6px;background:#bafaba"></div>
<div class="ab" style="left:18.5px;top:443.70000000000005px;width:872px;height:1px;background:rgba(255,255,255,0.45)"></div>
<div class="ab" style="left:102.0px;top:430.1px;width:1px;height:14.6px;background:rgba(255,255,255,0.3)"></div>
<div class="ab" style="left:241.0px;top:430.1px;width:1px;height:14.6px;background:rgba(255,255,255,0.3)"></div>
<div class="ab" style="left:297.5px;top:430.1px;width:1px;height:14.6px;background:rgba(255,255,255,0.3)"></div>
<div class="ab" style="left:355.0px;top:430.1px;width:1px;height:14.6px;background:rgba(255,255,255,0.3)"></div>
<div class="ab" style="left:412.5px;top:430.1px;width:1px;height:14.6px;background:rgba(255,255,255,0.3)"></div>
<div class="ab" style="left:471.0px;top:430.1px;width:1px;height:14.6px;background:rgba(255,255,255,0.3)"></div>
<div class="ab" style="left:501.8px;top:430.1px;width:1px;height:14.6px;background:rgba(255,255,255,0.3)"></div>
<div class="ab" style="left:559.5px;top:430.1px;width:1px;height:14.6px;background:rgba(255,255,255,0.3)"></div>
<div class="ab" style="left:616.8px;top:430.1px;width:1px;height:14.6px;background:rgba(255,255,255,0.3)"></div>
<div class="ab" style="left:674.5px;top:430.1px;width:1px;height:14.6px;background:rgba(255,255,255,0.3)"></div>
<div class="ab" style="left:732.3px;top:430.1px;width:1px;height:14.6px;background:rgba(255,255,255,0.3)"></div>
<div class="ab" style="left:789.5px;top:430.1px;width:1px;height:14.6px;background:rgba(255,255,255,0.3)"></div>
<div class="ab" style="left:8px;top:444.7px;width:10.5px;height:14.6px;background:#fff;border-bottom:1px solid #e6e6e6"></div>
<div class="ab" style="left:18.5px;top:444.7px;width:872px;height:14.6px;background:#a2d8a2"></div>
<div class="ab" style="left:18.5px;top:458.3px;width:872px;height:1px;background:rgba(0,50,0,0.07)"></div>
<div class="ab" style="left:102.0px;top:444.7px;width:1px;height:14.6px;background:rgba(255,255,255,0.3)"></div>
<div class="ab" style="left:241.0px;top:444.7px;width:1px;height:14.6px;background:rgba(255,255,255,0.3)"></div>
<div class="ab" style="left:297.5px;top:444.7px;width:1px;height:14.6px;background:rgba(255,255,255,0.3)"></div>
<div class="ab" style="left:355.0px;top:444.7px;width:1px;height:14.6px;background:rgba(255,255,255,0.3)"></div>
<div class="ab" style="left:412.5px;top:444.7px;width:1px;height:14.6px;background:rgba(255,255,255,0.3)"></div>
<div class="ab" style="left:471.0px;top:444.7px;width:1px;height:14.6px;background:rgba(255,255,255,0.3)"></div>
<div class="ab" style="left:501.8px;top:444.7px;width:1px;height:14.6px;background:rgba(255,255,255,0.3)"></div>
<div class="ab" style="left:559.5px;top:444.7px;width:1px;height:14.6px;background:rgba(255,255,255,0.3)"></div>
<div class="ab" style="left:616.8px;top:444.7px;width:1px;height:14.6px;background:rgba(255,255,255,0.3)"></div>
<div class="ab" style="left:674.5px;top:444.7px;width:1px;height:14.6px;background:rgba(255,255,255,0.3)"></div>
<div class="ab" style="left:732.3px;top:444.7px;width:1px;height:14.6px;background:rgba(255,255,255,0.3)"></div>
<div class="ab" style="left:789.5px;top:444.7px;width:1px;height:14.6px;background:rgba(255,255,255,0.3)"></div>
<div class="ab" style="left:8px;top:459.3px;width:10.5px;height:14.6px;background:#fff;border-bottom:1px solid #e6e6e6"></div>
<div class="ab" style="left:18.5px;top:459.3px;width:872px;height:14.6px;background:#bafaba"></div>
<div class="ab" style="left:102.0px;top:459.3px;width:1px;height:14.6px;background:rgba(255,255,255,0.3)"></div>
<div class="ab" style="left:241.0px;top:459.3px;width:1px;height:14.6px;background:rgba(255,255,255,0.3)"></div>
<div class="ab" style="left:297.5px;top:459.3px;width:1px;height:14.6px;background:rgba(255,255,255,0.3)"></div>
<div class="ab" style="left:355.0px;top:459.3px;width:1px;height:14.6px;background:rgba(255,255,255,0.3)"></div>
<div class="ab" style="left:412.5px;top:459.3px;width:1px;height:14.6px;background:rgba(255,255,255,0.3)"></div>
<div class="ab" style="left:471.0px;top:459.3px;width:1px;height:14.6px;background:rgba(255,255,255,0.3)"></div>
<div class="ab" style="left:501.8px;top:459.3px;width:1px;height:14.6px;background:rgba(255,255,255,0.3)"></div>
<div class="ab" style="left:559.5px;top:459.3px;width:1px;height:14.6px;background:rgba(255,255,255,0.3)"></div>
<div class="ab" style="left:616.8px;top:459.3px;width:1px;height:14.6px;background:rgba(255,255,255,0.3)"></div>
<div class="ab" style="left:674.5px;top:459.3px;width:1px;height:14.6px;background:rgba(255,255,255,0.3)"></div>
<div class="ab" style="left:732.3px;top:459.3px;width:1px;height:14.6px;background:rgba(255,255,255,0.3)"></div>
<div class="ab" style="left:789.5px;top:459.3px;width:1px;height:14.6px;background:rgba(255,255,255,0.3)"></div>
<svg class="ab" style="left:11px;top:419.3px" width="5" height="7" viewBox="0 0 5 7"><path d="M0.8 0.5L4.3 3.5L0.8 6.5Z" fill="#555"/></svg>
<div class="ab" style="left:8.5px;top:474px;width:882.5px;height:27.5px;background:#eeeeef"></div>
<div class="ab" style="left:8px;top:501.5px;width:884px;height:1px;background:#d2d2d6"></div>
<div class="ab" style="left:13.1px;top:510px;width:60.6px;height:20.7px;background:linear-gradient(#ebe7e1,#d6d0c6);border:1.4px solid #50647f;border-radius:3px"></div>
<div class="ab" style="left:76.2px;top:510px;width:60.7px;height:20.7px;background:linear-gradient(#fefefe,#ededed);border:1.4px solid #50647f;border-radius:3px"></div>
<div class="ab" style="left:296.9px;top:520.1px;width:10.6px;height:10.6px;background:#fcfcfc;border:1.2px solid #dedede"></div>
<div class="ab" style="left:485.6px;top:510.4px;width:78px;height:20.2px;background:linear-gradient(#fefefe,#ededed);border:1.4px solid #50647f;border-radius:3px"></div>
<div class="ab" style="left:566.4px;top:510.4px;width:78px;height:20.2px;background:linear-gradient(#fefefe,#ededed);border:1.4px solid #50647f;border-radius:3px"></div>
<div class="ab" style="left:666.4px;top:510.2px;width:78.3px;height:20.4px;background:linear-gradient(#fefefe,#ededed);border:1.4px solid #50647f;border-radius:3px"></div>
<div class="ab" style="left:747.1px;top:510.2px;width:77.9px;height:20.2px;background:linear-gradient(#fefefe,#ededed);border:1.4px solid #50647f;border-radius:3px"></div>
<div class="ab" style="left:827.5px;top:510.2px;width:60.1px;height:20.2px;background:linear-gradient(#fefefe,#ededed);border:1.4px solid #50647f;border-radius:3px"></div>
<svg class="ab" style="left:22px;top:514.5px" width="13" height="12.5" viewBox="0 0 13 12.5"><rect x="0.6" y="0.6" width="11" height="11.2" rx="0.8" fill="#eef4fa" stroke="#aab6dc" stroke-width="0.9"/><rect x="2" y="1.8" width="8.2" height="1.6" fill="#bcdcae"/><rect x="2" y="4.4" width="8.2" height="1.2" fill="#d4e4f4"/><path d="M3.6 8H12.6" stroke="#2f7d32" stroke-width="2"/><path d="M1.8 8L4.6 5.6V10.4Z" fill="#2f7d32"/></svg>
<svg class="ab" style="left:81.8px;top:514px" width="12.2" height="12" viewBox="0 0 12.2 12"><rect x="0.6" y="0.6" width="11" height="10.8" rx="1.6" fill="#aee4f6" stroke="#3a86c6" stroke-width="1.1"/><rect x="2.6" y="2" width="7" height="8" fill="#62c062"/><path d="M2.2 2.4H10M2.2 5.6H10M2.2 8.8H10" stroke="#2a6e36" stroke-width="0.8"/><rect x="2" y="3.4" width="1.3" height="1.4" fill="#c8f4ff"/><rect x="8.9" y="3.4" width="1.3" height="1.4" fill="#c8f4ff"/><rect x="2" y="6.6" width="1.3" height="1.4" fill="#c8f4ff"/><rect x="8.9" y="6.6" width="1.3" height="1.4" fill="#c8f4ff"/></svg>
<svg class="ab" style="left:668.8px;top:513.5px" width="11" height="13" viewBox="0 0 11 13"><path d="M2.5 0.6H7.3L10.2 3.5V11.8H2.5Z" fill="#f2f2f2" stroke="#a4a4a4" stroke-width="0.9"/><path d="M7.3 0.6V3.5H10.2" fill="none" stroke="#b4b4b4" stroke-width="0.8"/><path d="M0.8 7.6L2.9 9.8L7 5.4" fill="none" stroke="#2c7a2c" stroke-width="2.4"/><path d="M0.8 7.6L2.9 9.8L7 5.4" fill="none" stroke="#7ad86a" stroke-width="1.1"/></svg>
<svg class="ab" style="left:749.5px;top:513.5px" width="11" height="13" viewBox="0 0 11 13"><path d="M2.5 0.6H7.3L10.2 3.5V11.8H2.5Z" fill="#f2f2f2" stroke="#a4a4a4" stroke-width="0.9"/><path d="M7.3 0.6V3.5H10.2" fill="none" stroke="#b4b4b4" stroke-width="0.8"/><path d="M0.8 7.6L2.9 9.8L7 5.4" fill="none" stroke="#2c7a2c" stroke-width="2.4"/><path d="M0.8 7.6L2.9 9.8L7 5.4" fill="none" stroke="#7ad86a" stroke-width="1.1"/></svg>
<svg class="ab" style="left:831.8px;top:513.5px" width="11" height="13" viewBox="0 0 11 13"><path d="M2.5 0.6H7.3L10.2 3.5V11.8H2.5Z" fill="#f2f2f2" stroke="#a4a4a4" stroke-width="0.9"/><path d="M7.3 0.6V3.5H10.2" fill="none" stroke="#b4b4b4" stroke-width="0.8"/><path d="M1.3 4.6L6.3 9.8M6.3 4.6L1.3 9.8" stroke="#d0182a" stroke-width="2.3"/></svg>
<div class="ab" style="left:8px;top:537px;width:884px;height:1px;background:#d8d8dc"></div>
<div class="ab" style="left:8px;top:538px;width:884px;height:1px;background:#fbfbfb"></div>
<svg class="ab" style="left:884px;top:543.5px" width="8" height="8" viewBox="0 0 8 8"><rect x="6" y="0" width="1.6" height="1.6" fill="#b0b0b0"/><rect x="3" y="3" width="1.6" height="1.6" fill="#b0b0b0"/><rect x="6" y="3" width="1.6" height="1.6" fill="#b0b0b0"/><rect x="0" y="6" width="1.6" height="1.6" fill="#b0b0b0"/><rect x="3" y="6" width="1.6" height="1.6" fill="#b0b0b0"/><rect x="6" y="6" width="1.6" height="1.6" fill="#b0b0b0"/></svg>
<div style="position:absolute;left:0;top:0;width:1800px;height:1118px;transform:scale(0.5);transform-origin:0 0;will-change:transform"><div class="t" style="left:48.80px;top:20.60px;font-size:24px;transform:scale(0.8671,1.0);transform-origin:left 20px;color:#f6f6f6;text-shadow:0.5px 0 0 #f6f6f6">Bizonylat választás - Vevői rendelés</div>
<div class="t" style="left:63.60px;top:86.80px;font-size:20px;transform:scale(0.8891,0.94);transform-origin:left 17px;">Bizonylat ügyfele:</div>
<div class="t" style="left:217.80px;top:87.40px;font-size:20px;transform:scale(0.7509,0.94);transform-origin:left 17px;color:#0e0e0e">TESZT VEVŐ</div>
<div class="t" style="left:473.80px;top:86.80px;font-size:20px;transform:scale(0.8877,0.94);transform-origin:left 17px;">Más ügyfél:</div>
<div class="t" style="left:41.40px;top:133.00px;font-size:20px;transform:scale(0.8164,0.94);transform-origin:left 17px;">Év:</div>
<div class="t" style="left:85.80px;top:133.40px;font-size:20px;transform:scale(0.8000,0.94);transform-origin:left 17px;">2020</div>
<div class="t" style="left:265.40px;top:133.00px;font-size:20px;transform:scale(0.8563,0.94);transform-origin:left 17px;">Feldolgozatlan</div>
<div class="t" style="left:435.60px;top:123.80px;font-size:20px;transform:scale(0.8636,0.94);transform-origin:left 17px;">Minden telephely</div>
<div class="t" style="left:435.60px;top:143.40px;font-size:20px;transform:scale(0.8683,0.94);transform-origin:left 17px;">bizonylata</div>
<div class="t" style="left:810.00px;top:133.00px;font-size:20px;transform:scale(0.8022,0.94);transform-origin:left 17px;">Cikkszám:</div>
<div class="t" style="left:1346.60px;top:133.00px;font-size:20px;transform:scale(0.8854,0.94);transform-origin:left 17px;">Státusz:</div>
<div class="t" style="left:25.80px;top:170.60px;font-size:20px;transform:scale(0.8695,0.9);transform-origin:left 17px;">Bizonylatok - tartsa nyomva a CTRL billentyűt a többszörös kijelöléséhez</div>
<div class="t" style="left:630.67px;top:224.40px;font-size:20px;transform:scale(0.8250,0.94);transform-origin:center 17px;">Keres</div>
<div class="t" style="left:738.30px;top:224.40px;font-size:20px;transform:scale(0.8237,0.94);transform-origin:center 17px;">Töröl</div>
<div class="cl" style="left:37.00px;top:0;width:148.00px;height:1118px"><div class="t" style="left:3.20px;top:277.20px;font-size:20px;transform:scale(0.8416,0.97);transform-origin:left 17px;color:#262626;text-shadow:0.45px 0 0 #262626">Bizonylatszám</div></div>
<div class="cl" style="left:186.00px;top:0;width:103.00px;height:1118px"><div class="t" style="left:3.20px;top:277.20px;font-size:20px;transform:scale(0.8110,0.97);transform-origin:left 17px;color:#262626;text-shadow:0.45px 0 0 #262626">Kelt</div></div>
<div class="cl" style="left:290.00px;top:0;width:245.60px;height:1118px"><div class="t" style="left:3.20px;top:277.20px;font-size:20px;transform:scale(0.8250,0.97);transform-origin:left 17px;color:#262626;text-shadow:0.45px 0 0 #262626">Ügyfél</div></div>
<div class="cl" style="left:536.60px;top:0;width:45.40px;height:1118px"><div class="t" style="left:3.20px;top:277.20px;font-size:20px;transform:scale(0.8389,0.97);transform-origin:left 17px;color:#262626;text-shadow:0.45px 0 0 #262626">Irszá</div></div>
<div class="cl" style="left:583.00px;top:0;width:198.00px;height:1118px"><div class="t" style="left:3.20px;top:277.20px;font-size:20px;transform:scale(0.8592,0.97);transform-origin:left 17px;color:#262626;text-shadow:0.45px 0 0 #262626">Település</div></div>
<div class="cl" style="left:782.00px;top:0;width:198.00px;height:1118px"><div class="t" style="left:3.20px;top:277.20px;font-size:20px;transform:scale(0.8147,0.97);transform-origin:left 17px;color:#262626;text-shadow:0.45px 0 0 #262626">Utca</div></div>
<div class="cl" style="left:981.00px;top:0;width:103.00px;height:1118px"><div class="t" style="left:3.20px;top:277.20px;font-size:20px;transform:scale(0.9000,0.97);transform-origin:left 17px;color:#262626;text-shadow:0.45px 0 0 #262626">Nº össz.</div></div>
<div class="cl" style="left:1085.00px;top:0;width:101.00px;height:1118px"><div class="t" style="left:3.20px;top:277.20px;font-size:20px;transform:scale(0.8974,0.97);transform-origin:left 17px;color:#262626;text-shadow:0.45px 0 0 #262626">Áfa össz.</div></div>
<div class="cl" style="left:1187.00px;top:0;width:101.40px;height:1118px"><div class="t" style="left:3.20px;top:277.20px;font-size:20px;transform:scale(0.9000,0.97);transform-origin:left 17px;color:#262626;text-shadow:0.45px 0 0 #262626">Bº össz.</div></div>
<div class="cl" style="left:1289.40px;top:0;width:101.60px;height:1118px"><div class="t" style="left:3.20px;top:277.20px;font-size:20px;transform:scale(0.8374,0.97);transform-origin:left 17px;color:#262626;text-shadow:0.45px 0 0 #262626">Fizetendő</div></div>
<div class="cl" style="left:1392.00px;top:0;width:36.00px;height:1118px"><div class="t" style="left:3.20px;top:277.20px;font-size:20px;transform:scale(0.9000,0.97);transform-origin:left 17px;color:#262626;text-shadow:0.45px 0 0 #262626">Pn.</div></div>
<div class="cl" style="left:1429.00px;top:0;width:102.00px;height:1118px"><div class="t" style="left:3.20px;top:277.20px;font-size:20px;transform:scale(0.8621,0.97);transform-origin:left 17px;color:#262626;text-shadow:0.45px 0 0 #262626">Megjegyzés</div></div>
<div class="cl" style="left:1532.00px;top:0;width:120.00px;height:1118px"><div class="t" style="left:3.20px;top:277.20px;font-size:20px;transform:scale(0.8544,0.97);transform-origin:left 17px;color:#262626;text-shadow:0.45px 0 0 #262626">Előleg státusz</div></div>
<div class="cl" style="left:1653.00px;top:0;width:126.00px;height:1118px"><div class="t" style="left:3.20px;top:277.20px;font-size:20px;transform:scale(0.8546,0.97);transform-origin:left 17px;color:#262626;text-shadow:0.45px 0 0 #262626">Foglalások státusz</div></div>
<div class="t" style="left:40.20px;top:306.60px;font-size:20px;transform:scale(0.8574,1.0);transform-origin:left 17px;color:#183418;text-shadow:0.8px 0 0 #183418">VR-1-000363</div>
<div class="t" style="left:189.20px;top:306.60px;font-size:20px;transform:scale(0.9029,1.0);transform-origin:left 17px;color:#183418;text-shadow:0.8px 0 0 #183418">2020.08.19</div>
<div class="t" style="left:293.20px;top:306.60px;font-size:20px;transform:scale(0.7642,1.0);transform-origin:left 17px;color:#183418;text-shadow:0.8px 0 0 #183418">TESZT VEVŐ</div>
<div class="t" style="left:539.14px;top:306.60px;font-size:20px;transform:scale(0.9000,1.0);transform-origin:right 17px;color:#183418;text-shadow:0.8px 0 0 #183418">1111</div>
<div class="t" style="left:586.20px;top:306.60px;font-size:20px;transform:scale(0.7550,1.0);transform-origin:left 17px;color:#183418;text-shadow:0.8px 0 0 #183418">BUDAPEST</div>
<div class="t" style="left:785.20px;top:306.60px;font-size:20px;transform:scale(0.8453,1.0);transform-origin:left 17px;color:#183418;text-shadow:0.8px 0 0 #183418">TÓ U 5.</div>
<div class="t" style="left:1031.14px;top:306.60px;font-size:20px;transform:scale(0.8665,1.0);transform-origin:right 17px;color:#183418;text-shadow:0.8px 0 0 #183418">3 014</div>
<div class="t" style="left:1149.83px;top:306.60px;font-size:20px;transform:scale(0.8308,1.0);transform-origin:right 17px;color:#183418;text-shadow:0.8px 0 0 #183418">457</div>
<div class="t" style="left:1235.54px;top:306.60px;font-size:20px;transform:scale(0.8665,1.0);transform-origin:right 17px;color:#183418;text-shadow:0.8px 0 0 #183418">3 471</div>
<div class="t" style="left:1338.14px;top:306.60px;font-size:20px;transform:scale(0.8665,1.0);transform-origin:right 17px;color:#183418;text-shadow:0.8px 0 0 #183418">3 470</div>
<div class="t" style="left:1395.20px;top:306.60px;font-size:20px;transform:scale(0.7776,1.0);transform-origin:left 17px;color:#183418;text-shadow:0.8px 0 0 #183418">Ft</div>
<div class="t" style="left:40.20px;top:337.40px;font-size:20px;transform:scale(0.8842,1.0);transform-origin:left 17px;color:#183418;text-shadow:0.8px 0 0 #183418">VR-1-000352</div>
<div class="t" style="left:189.20px;top:337.40px;font-size:20px;transform:scale(0.9000,1.0);transform-origin:left 17px;color:#183418;text-shadow:0.8px 0 0 #183418">2020.08.17</div>
<div class="t" style="left:293.20px;top:337.40px;font-size:20px;transform:scale(0.7642,1.0);transform-origin:left 17px;color:#183418;text-shadow:0.8px 0 0 #183418">TESZT VEVŐ</div>
<div class="t" style="left:539.14px;top:337.40px;font-size:20px;transform:scale(0.9000,1.0);transform-origin:right 17px;color:#183418;text-shadow:0.8px 0 0 #183418">1111</div>
<div class="t" style="left:586.20px;top:337.40px;font-size:20px;transform:scale(0.7550,1.0);transform-origin:left 17px;color:#183418;text-shadow:0.8px 0 0 #183418">BUDAPEST</div>
<div class="t" style="left:785.20px;top:337.40px;font-size:20px;transform:scale(0.8453,1.0);transform-origin:left 17px;color:#183418;text-shadow:0.8px 0 0 #183418">TÓ U 5.</div>
<div class="t" style="left:1047.83px;top:337.40px;font-size:20px;transform:scale(0.8308,1.0);transform-origin:right 17px;color:#183418;text-shadow:0.8px 0 0 #183418">128</div>
<div class="t" style="left:1172.08px;top:337.40px;font-size:20px;transform:scale(0.8308,1.0);transform-origin:right 17px;color:#183418;text-shadow:0.8px 0 0 #183418">5</div>
<div class="t" style="left:1252.23px;top:337.40px;font-size:20px;transform:scale(0.8308,1.0);transform-origin:right 17px;color:#183418;text-shadow:0.8px 0 0 #183418">133</div>
<div class="t" style="left:1354.83px;top:337.40px;font-size:20px;transform:scale(0.8308,1.0);transform-origin:right 17px;color:#183418;text-shadow:0.8px 0 0 #183418">135</div>
<div class="t" style="left:1395.20px;top:337.40px;font-size:20px;transform:scale(0.7776,1.0);transform-origin:left 17px;color:#183418;text-shadow:0.8px 0 0 #183418">Ft</div>
<div class="t" style="left:40.20px;top:368.20px;font-size:20px;transform:scale(0.8842,1.0);transform-origin:left 17px;color:#183418;text-shadow:0.8px 0 0 #183418">VR-1-000271</div>
<div class="t" style="left:189.20px;top:368.20px;font-size:20px;transform:scale(0.9000,1.0);transform-origin:left 17px;color:#183418;text-shadow:0.8px 0 0 #183418">2020.06.02</div>
<div class="t" style="left:293.20px;top:368.20px;font-size:20px;transform:scale(0.7642,1.0);transform-origin:left 17px;color:#183418;text-shadow:0.8px 0 0 #183418">TESZT VEVŐ</div>
<div class="t" style="left:539.14px;top:368.20px;font-size:20px;transform:scale(0.9000,1.0);transform-origin:right 17px;color:#183418;text-shadow:0.8px 0 0 #183418">1111</div>
<div class="t" style="left:586.20px;top:368.20px;font-size:20px;transform:scale(0.7550,1.0);transform-origin:left 17px;color:#183418;text-shadow:0.8px 0 0 #183418">BUDAPEST</div>
<div class="t" style="left:785.20px;top:368.20px;font-size:20px;transform:scale(0.8453,1.0);transform-origin:left 17px;color:#183418;text-shadow:0.8px 0 0 #183418">TÓ U 5.</div>
<div class="t" style="left:975.54px;top:368.20px;font-size:20px;transform:scale(0.9067,1.0);transform-origin:right 17px;color:#183418;text-shadow:0.8px 0 0 #183418">59 672 474,</div>
<div class="t" style="left:1080.51px;top:368.20px;font-size:20px;transform:scale(0.9193,1.0);transform-origin:right 17px;color:#183418;text-shadow:0.8px 0 0 #183418">16 111 568,</div>
<div class="t" style="left:1179.94px;top:368.20px;font-size:20px;transform:scale(0.8991,1.0);transform-origin:right 17px;color:#183418;text-shadow:0.8px 0 0 #183418">75 784 042,</div>
<div class="t" style="left:1282.54px;top:368.20px;font-size:20px;transform:scale(0.8991,1.0);transform-origin:right 17px;color:#183418;text-shadow:0.8px 0 0 #183418">75 784 040,</div>
<div class="t" style="left:1395.20px;top:368.20px;font-size:20px;transform:scale(0.7776,1.0);transform-origin:left 17px;color:#183418;text-shadow:0.8px 0 0 #183418">Ft</div>
<div class="t" style="left:40.20px;top:399.00px;font-size:20px;transform:scale(0.8842,1.0);transform-origin:left 17px;color:#183418;text-shadow:0.8px 0 0 #183418">VR-1-000243</div>
<div class="t" style="left:189.20px;top:399.00px;font-size:20px;transform:scale(0.9000,1.0);transform-origin:left 17px;color:#183418;text-shadow:0.8px 0 0 #183418">2020.05.04</div>
<div class="t" style="left:293.20px;top:399.00px;font-size:20px;transform:scale(0.7642,1.0);transform-origin:left 17px;color:#183418;text-shadow:0.8px 0 0 #183418">TESZT VEVŐ</div>
<div class="t" style="left:539.14px;top:399.00px;font-size:20px;transform:scale(0.9000,1.0);transform-origin:right 17px;color:#183418;text-shadow:0.8px 0 0 #183418">1111</div>
<div class="t" style="left:586.20px;top:399.00px;font-size:20px;transform:scale(0.7550,1.0);transform-origin:left 17px;color:#183418;text-shadow:0.8px 0 0 #183418">BUDAPEST</div>
<div class="t" style="left:785.20px;top:399.00px;font-size:20px;transform:scale(0.8453,1.0);transform-origin:left 17px;color:#183418;text-shadow:0.8px 0 0 #183418">TÓ U 5.</div>
<div class="t" style="left:992.20px;top:399.00px;font-size:20px;transform:scale(0.8915,1.0);transform-origin:right 17px;color:#183418;text-shadow:0.8px 0 0 #183418">10 044,00</div>
<div class="t" style="left:1105.33px;top:399.00px;font-size:20px;transform:scale(0.9000,1.0);transform-origin:right 17px;color:#183418;text-shadow:0.8px 0 0 #183418">2 700,00</div>
<div class="t" style="left:1196.60px;top:399.00px;font-size:20px;transform:scale(0.8915,1.0);transform-origin:right 17px;color:#183418;text-shadow:0.8px 0 0 #183418">12 744,00</div>
<div class="t" style="left:1299.20px;top:399.00px;font-size:20px;transform:scale(0.8915,1.0);transform-origin:right 17px;color:#183418;text-shadow:0.8px 0 0 #183418">12 745,00</div>
<div class="t" style="left:1395.20px;top:399.00px;font-size:20px;transform:scale(0.7776,1.0);transform-origin:left 17px;color:#183418;text-shadow:0.8px 0 0 #183418">Ft</div>
<div class="t" style="left:40.20px;top:429.80px;font-size:20px;transform:scale(0.8842,1.0);transform-origin:left 17px;color:#183418;text-shadow:0.8px 0 0 #183418">VR-1-000242</div>
<div class="t" style="left:189.20px;top:429.80px;font-size:20px;transform:scale(0.9000,1.0);transform-origin:left 17px;color:#183418;text-shadow:0.8px 0 0 #183418">2020.05.04</div>
<div class="t" style="left:293.20px;top:429.80px;font-size:20px;transform:scale(0.7642,1.0);transform-origin:left 17px;color:#183418;text-shadow:0.8px 0 0 #183418">TESZT VEVŐ</div>
<div class="t" style="left:539.14px;top:429.80px;font-size:20px;transform:scale(0.9000,1.0);transform-origin:right 17px;color:#183418;text-shadow:0.8px 0 0 #183418">1111</div>
<div class="t" style="left:586.20px;top:429.80px;font-size:20px;transform:scale(0.7550,1.0);transform-origin:left 17px;color:#183418;text-shadow:0.8px 0 0 #183418">BUDAPEST</div>
<div class="t" style="left:785.20px;top:429.80px;font-size:20px;transform:scale(0.8453,1.0);transform-origin:left 17px;color:#183418;text-shadow:0.8px 0 0 #183418">TÓ U 5.</div>
<div class="t" style="left:1003.33px;top:429.80px;font-size:20px;transform:scale(0.9000,1.0);transform-origin:right 17px;color:#183418;text-shadow:0.8px 0 0 #183418">5 000,00</div>
<div class="t" style="left:1105.33px;top:429.80px;font-size:20px;transform:scale(0.9000,1.0);transform-origin:right 17px;color:#183418;text-shadow:0.8px 0 0 #183418">1 350,00</div>
<div class="t" style="left:1207.73px;top:429.80px;font-size:20px;transform:scale(0.9000,1.0);transform-origin:right 17px;color:#183418;text-shadow:0.8px 0 0 #183418">6 350,00</div>
<div class="t" style="left:1310.33px;top:429.80px;font-size:20px;transform:scale(0.9000,1.0);transform-origin:right 17px;color:#183418;text-shadow:0.8px 0 0 #183418">6 350,00</div>
<div class="t" style="left:1395.20px;top:429.80px;font-size:20px;transform:scale(0.7776,1.0);transform-origin:left 17px;color:#183418;text-shadow:0.8px 0 0 #183418">Ft</div>
<div class="t" style="left:40.20px;top:460.60px;font-size:20px;transform:scale(0.8842,1.0);transform-origin:left 17px;color:#183418;text-shadow:0.8px 0 0 #183418">VR-1-000214</div>
<div class="t" style="left:189.20px;top:460.60px;font-size:20px;transform:scale(0.9000,1.0);transform-origin:left 17px;color:#183418;text-shadow:0.8px 0 0 #183418">2020.02.19</div>
<div class="t" style="left:293.20px;top:460.60px;font-size:20px;transform:scale(0.7642,1.0);transform-origin:left 17px;color:#183418;text-shadow:0.8px 0 0 #183418">TESZT VEVŐ</div>
<div class="t" style="left:539.14px;top:460.60px;font-size:20px;transform:scale(0.9000,1.0);transform-origin:right 17px;color:#183418;text-shadow:0.8px 0 0 #183418">1111</div>
<div class="t" style="left:586.20px;top:460.60px;font-size:20px;transform:scale(0.7550,1.0);transform-origin:left 17px;color:#183418;text-shadow:0.8px 0 0 #183418">BUDAPEST</div>
<div class="t" style="left:785.20px;top:460.60px;font-size:20px;transform:scale(0.8453,1.0);transform-origin:left 17px;color:#183418;text-shadow:0.8px 0 0 #183418">TÓ U 5.</div>
<div class="t" style="left:992.20px;top:460.60px;font-size:20px;transform:scale(0.8915,1.0);transform-origin:right 17px;color:#183418;text-shadow:0.8px 0 0 #183418">23 622,06</div>
<div class="t" style="left:1105.33px;top:460.60px;font-size:20px;transform:scale(0.9000,1.0);transform-origin:right 17px;color:#183418;text-shadow:0.8px 0 0 #183418">6 377,96</div>
<div class="t" style="left:1196.60px;top:460.60px;font-size:20px;transform:scale(0.8915,1.0);transform-origin:right 17px;color:#183418;text-shadow:0.8px 0 0 #183418">30 000,02</div>
<div class="t" style="left:1327.01px;top:460.60px;font-size:20px;transform:scale(0.8600,1.0);transform-origin:right 17px;color:#183418;text-shadow:0.8px 0 0 #183418">30 000</div>
<div class="t" style="left:1395.20px;top:460.60px;font-size:20px;transform:scale(0.7776,1.0);transform-origin:left 17px;color:#183418;text-shadow:0.8px 0 0 #183418">Ft</div>
<div class="t" style="left:40.20px;top:491.40px;font-size:20px;transform:scale(0.8842,1.0);transform-origin:left 17px;color:#061a4e;text-shadow:0.8px 0 0 #061a4e">VR-1-000213</div>
<div class="t" style="left:189.20px;top:491.40px;font-size:20px;transform:scale(0.9000,1.0);transform-origin:left 17px;color:#061a4e;text-shadow:0.8px 0 0 #061a4e">2020.02.19</div>
<div class="t" style="left:293.20px;top:491.40px;font-size:20px;transform:scale(0.7642,1.0);transform-origin:left 17px;color:#061a4e;text-shadow:0.8px 0 0 #061a4e">TESZT VEVŐ</div>
<div class="t" style="left:539.14px;top:491.40px;font-size:20px;transform:scale(0.9000,1.0);transform-origin:right 17px;color:#061a4e;text-shadow:0.8px 0 0 #061a4e">1111</div>
<div class="t" style="left:586.20px;top:491.40px;font-size:20px;transform:scale(0.7550,1.0);transform-origin:left 17px;color:#183418;text-shadow:0.8px 0 0 #183418">BUDAPEST</div>
<div class="t" style="left:785.20px;top:491.40px;font-size:20px;transform:scale(0.8453,1.0);transform-origin:left 17px;color:#061a4e;text-shadow:0.8px 0 0 #061a4e">TÓ U 5.</div>
<div class="t" style="left:992.20px;top:491.40px;font-size:20px;transform:scale(0.8915,1.0);transform-origin:right 17px;color:#061a4e;text-shadow:0.8px 0 0 #061a4e">23 622,06</div>
<div class="t" style="left:1105.33px;top:491.40px;font-size:20px;transform:scale(0.9000,1.0);transform-origin:right 17px;color:#061a4e;text-shadow:0.8px 0 0 #061a4e">6 377,96</div>
<div class="t" style="left:1196.60px;top:491.40px;font-size:20px;transform:scale(0.8915,1.0);transform-origin:right 17px;color:#061a4e;text-shadow:0.8px 0 0 #061a4e">30 000,02</div>
<div class="t" style="left:1299.20px;top:491.40px;font-size:20px;transform:scale(0.8915,1.0);transform-origin:right 17px;color:#061a4e;text-shadow:0.8px 0 0 #061a4e">30 000,02</div>
<div class="t" style="left:1395.20px;top:491.40px;font-size:20px;transform:scale(0.7776,1.0);transform-origin:left 17px;color:#061a4e;text-shadow:0.8px 0 0 #061a4e">Ft</div>
<div class="t" style="left:40.20px;top:522.20px;font-size:20px;transform:scale(0.8952,1.0);transform-origin:left 17px;color:#183418;text-shadow:0.8px 0 0 #183418">VR-1-000211</div>
<div class="t" style="left:189.20px;top:522.20px;font-size:20px;transform:scale(0.9000,1.0);transform-origin:left 17px;color:#183418;text-shadow:0.8px 0 0 #183418">2020.02.19</div>
<div class="t" style="left:293.20px;top:522.20px;font-size:20px;transform:scale(0.7642,1.0);transform-origin:left 17px;color:#183418;text-shadow:0.8px 0 0 #183418">TESZT VEVŐ</div>
<div class="t" style="left:539.14px;top:522.20px;font-size:20px;transform:scale(0.9000,1.0);transform-origin:right 17px;color:#183418;text-shadow:0.8px 0 0 #183418">1111</div>
<div class="t" style="left:586.20px;top:522.20px;font-size:20px;transform:scale(0.7550,1.0);transform-origin:left 17px;color:#183418;text-shadow:0.8px 0 0 #183418">BUDAPEST</div>
<div class="t" style="left:785.20px;top:522.20px;font-size:20px;transform:scale(0.8453,1.0);transform-origin:left 17px;color:#183418;text-shadow:0.8px 0 0 #183418">TÓ U 5.</div>
<div class="t" style="left:1003.33px;top:522.20px;font-size:20px;transform:scale(0.9000,1.0);transform-origin:right 17px;color:#183418;text-shadow:0.8px 0 0 #183418">5 166,05</div>
<div class="t" style="left:1105.33px;top:522.20px;font-size:20px;transform:scale(0.9000,1.0);transform-origin:right 17px;color:#183418;text-shadow:0.8px 0 0 #183418">1 394,83</div>
<div class="t" style="left:1207.73px;top:522.20px;font-size:20px;transform:scale(0.9000,1.0);transform-origin:right 17px;color:#183418;text-shadow:0.8px 0 0 #183418">6 560,88</div>
<div class="t" style="left:1338.14px;top:522.20px;font-size:20px;transform:scale(0.8665,1.0);transform-origin:right 17px;color:#183418;text-shadow:0.8px 0 0 #183418">6 560</div>
<div class="t" style="left:1395.20px;top:522.20px;font-size:20px;transform:scale(0.7776,1.0);transform-origin:left 17px;color:#183418;text-shadow:0.8px 0 0 #183418">Ft</div>
<div class="t" style="left:40.20px;top:553.00px;font-size:20px;transform:scale(0.8842,1.0);transform-origin:left 17px;color:#183418;text-shadow:0.8px 0 0 #183418">VR-1-000182</div>
<div class="t" style="left:189.20px;top:553.00px;font-size:20px;transform:scale(0.9000,1.0);transform-origin:left 17px;color:#183418;text-shadow:0.8px 0 0 #183418">2020.01.20</div>
<div class="t" style="left:293.20px;top:553.00px;font-size:20px;transform:scale(0.7642,1.0);transform-origin:left 17px;color:#183418;text-shadow:0.8px 0 0 #183418">TESZT VEVŐ</div>
<div class="t" style="left:539.14px;top:553.00px;font-size:20px;transform:scale(0.9000,1.0);transform-origin:right 17px;color:#183418;text-shadow:0.8px 0 0 #183418">1111</div>
<div class="t" style="left:586.20px;top:553.00px;font-size:20px;transform:scale(0.7550,1.0);transform-origin:left 17px;color:#183418;text-shadow:0.8px 0 0 #183418">BUDAPEST</div>
<div class="t" style="left:785.20px;top:553.00px;font-size:20px;transform:scale(0.8453,1.0);transform-origin:left 17px;color:#183418;text-shadow:0.8px 0 0 #183418">TÓ U 5.</div>
<div class="t" style="left:1020.01px;top:553.00px;font-size:20px;transform:scale(0.8600,1.0);transform-origin:right 17px;color:#183418;text-shadow:0.8px 0 0 #183418">98 555</div>
<div class="t" style="left:1094.20px;top:553.00px;font-size:20px;transform:scale(0.8915,1.0);transform-origin:right 17px;color:#183418;text-shadow:0.8px 0 0 #183418">26 609,85</div>
<div class="t" style="left:1185.48px;top:553.00px;font-size:20px;transform:scale(0.8847,1.0);transform-origin:right 17px;color:#183418;text-shadow:0.8px 0 0 #183418">125 164,85</div>
<div class="t" style="left:1315.89px;top:553.00px;font-size:20px;transform:scale(0.8555,1.0);transform-origin:right 17px;color:#183418;text-shadow:0.8px 0 0 #183418">125 165</div>
<div class="t" style="left:1395.20px;top:553.00px;font-size:20px;transform:scale(0.7776,1.0);transform-origin:left 17px;color:#183418;text-shadow:0.8px 0 0 #183418">Ft</div>
<div class="t" style="left:40.20px;top:583.80px;font-size:20px;transform:scale(0.8842,1.0);transform-origin:left 17px;color:#183418;text-shadow:0.8px 0 0 #183418">VR-1-000146</div>
<div class="t" style="left:189.20px;top:583.80px;font-size:20px;transform:scale(0.9000,1.0);transform-origin:left 17px;color:#183418;text-shadow:0.8px 0 0 #183418">2020.01.07</div>
<div class="t" style="left:293.20px;top:583.80px;font-size:20px;transform:scale(0.7642,1.0);transform-origin:left 17px;color:#183418;text-shadow:0.8px 0 0 #183418">TESZT VEVŐ</div>
<div class="t" style="left:539.14px;top:583.80px;font-size:20px;transform:scale(0.9000,1.0);transform-origin:right 17px;color:#183418;text-shadow:0.8px 0 0 #183418">1111</div>
<div class="t" style="left:586.20px;top:583.80px;font-size:20px;transform:scale(0.7550,1.0);transform-origin:left 17px;color:#183418;text-shadow:0.8px 0 0 #183418">BUDAPEST</div>
<div class="t" style="left:785.20px;top:583.80px;font-size:20px;transform:scale(0.8453,1.0);transform-origin:left 17px;color:#183418;text-shadow:0.8px 0 0 #183418">TÓ U 5.</div>
<div class="t" style="left:992.20px;top:583.80px;font-size:20px;transform:scale(0.8915,1.0);transform-origin:right 17px;color:#183418;text-shadow:0.8px 0 0 #183418">15 948,04</div>
<div class="t" style="left:1105.33px;top:583.80px;font-size:20px;transform:scale(0.9000,1.0);transform-origin:right 17px;color:#183418;text-shadow:0.8px 0 0 #183418">4 305,97</div>
<div class="t" style="left:1196.60px;top:583.80px;font-size:20px;transform:scale(0.8915,1.0);transform-origin:right 17px;color:#183418;text-shadow:0.8px 0 0 #183418">20 254,01</div>
<div class="t" style="left:1299.20px;top:583.80px;font-size:20px;transform:scale(0.8915,1.0);transform-origin:right 17px;color:#183418;text-shadow:0.8px 0 0 #183418">20 255,00</div>
<div class="t" style="left:1395.20px;top:583.80px;font-size:20px;transform:scale(0.7776,1.0);transform-origin:left 17px;color:#183418;text-shadow:0.8px 0 0 #183418">Ft</div>
<div class="t" style="left:23.40px;top:664.60px;font-size:20px;transform:scale(0.7776,0.94);transform-origin:left 17px;">Ft</div>
<div class="t" style="left:122.00px;top:665.40px;font-size:20px;transform:scale(0.9162,0.94);transform-origin:left 17px;">Nettó össz.: 59 857 573,51 Ft; Áfa össz.: 16 161 146,63 Ft; Bruttó össz.: 76 018 720,14 Ft, ebből feldolgozatlan (nyitott): 75 988 275 Ft</div>
<div class="t" style="left:25.80px;top:701.60px;font-size:20px;transform:scale(0.8727,0.9);transform-origin:left 17px;">Tételek - tartsa nyomva a CTRL billentyűt a többszörös kijelöléséhez</div>
<div class="t" style="left:630.67px;top:755.80px;font-size:20px;transform:scale(0.8250,0.94);transform-origin:center 17px;">Keres</div>
<div class="t" style="left:738.30px;top:755.80px;font-size:20px;transform:scale(0.8237,0.94);transform-origin:center 17px;">Töröl</div>
<div class="cl" style="left:37.00px;top:0;width:167.00px;height:1118px"><div class="t" style="left:3.20px;top:806.80px;font-size:20px;transform:scale(0.8347,0.97);transform-origin:left 17px;color:#262626;text-shadow:0.45px 0 0 #262626">Cikkszám</div></div>
<div class="cl" style="left:205.00px;top:0;width:277.00px;height:1118px"><div class="t" style="left:3.20px;top:806.80px;font-size:20px;transform:scale(0.8125,0.97);transform-origin:left 17px;color:#262626;text-shadow:0.45px 0 0 #262626">Cikk</div></div>
<div class="cl" style="left:483.00px;top:0;width:112.00px;height:1118px"><div class="t" style="left:3.20px;top:806.80px;font-size:20px;transform:scale(0.8340,0.97);transform-origin:left 17px;color:#262626;text-shadow:0.45px 0 0 #262626">Mennyiség</div></div>
<div class="cl" style="left:596.00px;top:0;width:114.00px;height:1118px"><div class="t" style="left:3.20px;top:806.80px;font-size:20px;transform:scale(0.8404,0.97);transform-origin:left 17px;color:#262626;text-shadow:0.45px 0 0 #262626">Feldolgozva</div></div>
<div class="cl" style="left:711.00px;top:0;width:114.00px;height:1118px"><div class="t" style="left:3.20px;top:806.80px;font-size:20px;transform:scale(0.8364,0.97);transform-origin:left 17px;color:#262626;text-shadow:0.45px 0 0 #262626">Stornózva</div></div>
<div class="cl" style="left:826.00px;top:0;width:116.00px;height:1118px"><div class="t" style="left:3.20px;top:806.80px;font-size:20px;transform:scale(0.9058,0.97);transform-origin:left 17px;color:#262626;text-shadow:0.45px 0 0 #262626">Nyitott mennyiség</div></div>
<div class="cl" style="left:943.00px;top:0;width:60.60px;height:1118px"><div class="t" style="left:3.20px;top:806.80px;font-size:20px;transform:scale(0.9000,0.97);transform-origin:left 17px;color:#262626;text-shadow:0.45px 0 0 #262626">Me.</div></div>
<div class="cl" style="left:1004.60px;top:0;width:114.40px;height:1118px"><div class="t" style="left:3.20px;top:806.80px;font-size:20px;transform:scale(0.8549,0.97);transform-origin:left 17px;color:#262626;text-shadow:0.45px 0 0 #262626">Nº eár</div></div>
<div class="cl" style="left:1120.00px;top:0;width:113.60px;height:1118px"><div class="t" style="left:3.20px;top:806.80px;font-size:20px;transform:scale(0.8552,0.97);transform-origin:left 17px;color:#262626;text-shadow:0.45px 0 0 #262626">Áfa kulcs</div></div>
<div class="cl" style="left:1234.60px;top:0;width:114.40px;height:1118px"><div class="t" style="left:3.20px;top:806.80px;font-size:20px;transform:scale(0.9000,0.97);transform-origin:left 17px;color:#262626;text-shadow:0.45px 0 0 #262626">Nº össz.</div></div>
<div class="cl" style="left:1350.00px;top:0;width:114.60px;height:1118px"><div class="t" style="left:3.20px;top:806.80px;font-size:20px;transform:scale(0.8040,0.97);transform-origin:left 17px;color:#262626;text-shadow:0.45px 0 0 #262626">Áfa</div></div>
<div class="cl" style="left:1465.60px;top:0;width:113.40px;height:1118px"><div class="t" style="left:3.20px;top:806.80px;font-size:20px;transform:scale(0.9000,0.97);transform-origin:left 17px;color:#262626;text-shadow:0.45px 0 0 #262626">Bº össz.</div></div>
<div class="cl" style="left:1580.00px;top:0;width:200.00px;height:1118px"><div class="t" style="left:3.20px;top:806.80px;font-size:20px;transform:scale(0.8545,0.97);transform-origin:left 17px;color:#262626;text-shadow:0.45px 0 0 #262626">Vállalási határidő</div></div>
<div class="t" style="left:40.20px;top:836.80px;font-size:20px;transform:scale(0.7836,1.0);transform-origin:left 17px;color:#183418;text-shadow:0.8px 0 0 #183418">PCT122</div>
<div class="t" style="left:208.20px;top:836.80px;font-size:20px;transform:scale(0.7584,1.0);transform-origin:left 17px;color:#183418;text-shadow:0.8px 0 0 #183418">CSOPORTOS TERMÉK</div>
<div class="t" style="left:581.08px;top:836.80px;font-size:20px;transform:scale(0.8308,1.0);transform-origin:right 17px;color:#183418;text-shadow:0.8px 0 0 #183418">3</div>
<div class="t" style="left:696.08px;top:836.80px;font-size:20px;transform:scale(0.8308,1.0);transform-origin:right 17px;color:#183418;text-shadow:0.8px 0 0 #183418">0</div>
<div class="t" style="left:811.08px;top:836.80px;font-size:20px;transform:scale(0.8308,1.0);transform-origin:right 17px;color:#183418;text-shadow:0.8px 0 0 #183418">0</div>
<div class="t" style="left:928.08px;top:836.80px;font-size:20px;transform:scale(0.8308,1.0);transform-origin:right 17px;color:#183418;text-shadow:0.8px 0 0 #183418">3</div>
<div class="t" style="left:946.20px;top:836.80px;font-size:20px;transform:scale(0.8522,1.0);transform-origin:left 17px;color:#183418;text-shadow:0.8px 0 0 #183418">db</div>
<div class="t" style="left:1038.33px;top:836.80px;font-size:20px;transform:scale(0.9000,1.0);transform-origin:right 17px;color:#183418;text-shadow:0.8px 0 0 #183418">7 874,02</div>
<div class="t" style="left:1208.55px;top:836.80px;font-size:20px;transform:scale(0.8308,1.0);transform-origin:right 17px;color:#183418;text-shadow:0.8px 0 0 #183418">27</div>
<div class="t" style="left:1257.20px;top:836.80px;font-size:20px;transform:scale(0.8915,1.0);transform-origin:right 17px;color:#183418;text-shadow:0.8px 0 0 #183418">23 622,06</div>
<div class="t" style="left:1383.92px;top:836.80px;font-size:20px;transform:scale(0.9000,1.0);transform-origin:right 17px;color:#183418;text-shadow:0.8px 0 0 #183418">6 377,96</div>
<div class="t" style="left:1487.20px;top:836.80px;font-size:20px;transform:scale(0.8915,1.0);transform-origin:right 17px;color:#183418;text-shadow:0.8px 0 0 #183418">30 000,02</div>
<div class="t" style="left:1583.20px;top:836.80px;font-size:20px;transform:scale(0.9000,1.0);transform-origin:left 17px;color:#183418;text-shadow:0.8px 0 0 #183418">2020.02.23.</div>
<div class="t" style="left:40.20px;top:866.00px;font-size:20px;transform:scale(0.7836,1.0);transform-origin:left 17px;color:#183418;text-shadow:0.8px 0 0 #183418">PCT124</div>
<div class="t" style="left:208.20px;top:866.00px;font-size:20px;transform:scale(0.8032,1.0);transform-origin:left 17px;color:#183418;text-shadow:0.8px 0 0 #183418">CSOPORT FIFO 1.</div>
<div class="t" style="left:581.08px;top:866.00px;font-size:20px;transform:scale(0.8308,1.0);transform-origin:right 17px;color:#183418;text-shadow:0.8px 0 0 #183418">3</div>
<div class="t" style="left:696.08px;top:866.00px;font-size:20px;transform:scale(0.8308,1.0);transform-origin:right 17px;color:#183418;text-shadow:0.8px 0 0 #183418">0</div>
<div class="t" style="left:811.08px;top:866.00px;font-size:20px;transform:scale(0.8308,1.0);transform-origin:right 17px;color:#183418;text-shadow:0.8px 0 0 #183418">0</div>
<div class="t" style="left:928.08px;top:866.00px;font-size:20px;transform:scale(0.8308,1.0);transform-origin:right 17px;color:#183418;text-shadow:0.8px 0 0 #183418">3</div>
<div class="t" style="left:946.20px;top:866.00px;font-size:20px;transform:scale(0.8522,1.0);transform-origin:left 17px;color:#183418;text-shadow:0.8px 0 0 #183418">db</div>
<div class="t" style="left:1105.08px;top:866.00px;font-size:20px;transform:scale(0.8308,1.0);transform-origin:right 17px;color:#183418;text-shadow:0.8px 0 0 #183418">0</div>
<div class="t" style="left:1208.55px;top:866.00px;font-size:20px;transform:scale(0.8308,1.0);transform-origin:right 17px;color:#183418;text-shadow:0.8px 0 0 #183418">27</div>
<div class="t" style="left:1335.08px;top:866.00px;font-size:20px;transform:scale(0.8308,1.0);transform-origin:right 17px;color:#183418;text-shadow:0.8px 0 0 #183418">0</div>
<div class="t" style="left:1450.67px;top:866.00px;font-size:20px;transform:scale(0.8308,1.0);transform-origin:right 17px;color:#183418;text-shadow:0.8px 0 0 #183418">0</div>
<div class="t" style="left:1565.08px;top:866.00px;font-size:20px;transform:scale(0.8308,1.0);transform-origin:right 17px;color:#183418;text-shadow:0.8px 0 0 #183418">0</div>
<div class="t" style="left:1583.20px;top:866.00px;font-size:20px;transform:scale(0.9000,1.0);transform-origin:left 17px;color:#183418;text-shadow:0.8px 0 0 #183418">2020.02.23.</div>
<div class="t" style="left:40.20px;top:895.20px;font-size:20px;transform:scale(0.7836,1.0);transform-origin:left 17px;color:#183418;text-shadow:0.8px 0 0 #183418">PCT125</div>
<div class="t" style="left:208.20px;top:895.20px;font-size:20px;transform:scale(0.7805,1.0);transform-origin:left 17px;color:#183418;text-shadow:0.8px 0 0 #183418">CSOPORT FIFO 2</div>
<div class="t" style="left:581.08px;top:895.20px;font-size:20px;transform:scale(0.8308,1.0);transform-origin:right 17px;color:#183418;text-shadow:0.8px 0 0 #183418">6</div>
<div class="t" style="left:696.08px;top:895.20px;font-size:20px;transform:scale(0.8308,1.0);transform-origin:right 17px;color:#183418;text-shadow:0.8px 0 0 #183418">0</div>
<div class="t" style="left:811.08px;top:895.20px;font-size:20px;transform:scale(0.8308,1.0);transform-origin:right 17px;color:#183418;text-shadow:0.8px 0 0 #183418">0</div>
<div class="t" style="left:928.08px;top:895.20px;font-size:20px;transform:scale(0.8308,1.0);transform-origin:right 17px;color:#183418;text-shadow:0.8px 0 0 #183418">6</div>
<div class="t" style="left:946.20px;top:895.20px;font-size:20px;transform:scale(0.8522,1.0);transform-origin:left 17px;color:#183418;text-shadow:0.8px 0 0 #183418">db</div>
<div class="t" style="left:1105.08px;top:895.20px;font-size:20px;transform:scale(0.8308,1.0);transform-origin:right 17px;color:#183418;text-shadow:0.8px 0 0 #183418">0</div>
<div class="t" style="left:1208.55px;top:895.20px;font-size:20px;transform:scale(0.8308,1.0);transform-origin:right 17px;color:#183418;text-shadow:0.8px 0 0 #183418">27</div>
<div class="t" style="left:1335.08px;top:895.20px;font-size:20px;transform:scale(0.8308,1.0);transform-origin:right 17px;color:#183418;text-shadow:0.8px 0 0 #183418">0</div>
<div class="t" style="left:1450.67px;top:895.20px;font-size:20px;transform:scale(0.8308,1.0);transform-origin:right 17px;color:#183418;text-shadow:0.8px 0 0 #183418">0</div>
<div class="t" style="left:1565.08px;top:895.20px;font-size:20px;transform:scale(0.8308,1.0);transform-origin:right 17px;color:#183418;text-shadow:0.8px 0 0 #183418">0</div>
<div class="t" style="left:1583.20px;top:895.20px;font-size:20px;transform:scale(0.9000,1.0);transform-origin:left 17px;color:#183418;text-shadow:0.8px 0 0 #183418">2020.02.23.</div>
<div class="t" style="left:40.20px;top:924.40px;font-size:20px;transform:scale(0.7836,1.0);transform-origin:left 17px;color:#183418;text-shadow:0.8px 0 0 #183418">PCT126</div>
<div class="t" style="left:208.20px;top:924.40px;font-size:20px;transform:scale(0.7674,1.0);transform-origin:left 17px;color:#183418;text-shadow:0.8px 0 0 #183418">CSOPORT KK NÉLKÜLI</div>
<div class="t" style="left:564.39px;top:924.40px;font-size:20px;transform:scale(0.9000,1.0);transform-origin:right 17px;color:#183418;text-shadow:0.8px 0 0 #183418">4,5</div>
<div class="t" style="left:696.08px;top:924.40px;font-size:20px;transform:scale(0.8308,1.0);transform-origin:right 17px;color:#183418;text-shadow:0.8px 0 0 #183418">0</div>
<div class="t" style="left:811.08px;top:924.40px;font-size:20px;transform:scale(0.8308,1.0);transform-origin:right 17px;color:#183418;text-shadow:0.8px 0 0 #183418">0</div>
<div class="t" style="left:911.39px;top:924.40px;font-size:20px;transform:scale(0.9000,1.0);transform-origin:right 17px;color:#183418;text-shadow:0.8px 0 0 #183418">4,5</div>
<div class="t" style="left:946.20px;top:924.40px;font-size:20px;transform:scale(0.8522,1.0);transform-origin:left 17px;color:#183418;text-shadow:0.8px 0 0 #183418">db</div>
<div class="t" style="left:1105.08px;top:924.40px;font-size:20px;transform:scale(0.8308,1.0);transform-origin:right 17px;color:#183418;text-shadow:0.8px 0 0 #183418">0</div>
<div class="t" style="left:1208.55px;top:924.40px;font-size:20px;transform:scale(0.8308,1.0);transform-origin:right 17px;color:#183418;text-shadow:0.8px 0 0 #183418">27</div>
<div class="t" style="left:1335.08px;top:924.40px;font-size:20px;transform:scale(0.8308,1.0);transform-origin:right 17px;color:#183418;text-shadow:0.8px 0 0 #183418">0</div>
<div class="t" style="left:1450.67px;top:924.40px;font-size:20px;transform:scale(0.8308,1.0);transform-origin:right 17px;color:#183418;text-shadow:0.8px 0 0 #183418">0</div>
<div class="t" style="left:1565.08px;top:924.40px;font-size:20px;transform:scale(0.8308,1.0);transform-origin:right 17px;color:#183418;text-shadow:0.8px 0 0 #183418">0</div>
<div class="t" style="left:1583.20px;top:924.40px;font-size:20px;transform:scale(0.9000,1.0);transform-origin:left 17px;color:#183418;text-shadow:0.8px 0 0 #183418">2020.02.23.</div>
<div class="cl" style="left:28.20px;top:0;width:116.20px;height:1118px"><div class="t" style="left:46.40px;top:1031.00px;font-size:20px;transform:scale(0.8537,0.94);transform-origin:left 17px;color:#161616">Tételek</div></div>
<div class="cl" style="left:154.40px;top:0;width:116.40px;height:1118px"><div class="t" style="left:37.60px;top:1031.00px;font-size:20px;transform:scale(0.8234,0.94);transform-origin:left 17px;color:#161616">SN kódok</div></div>
<div class="t" style="left:622.20px;top:1041.00px;font-size:20px;transform:scale(0.8527,0.94);transform-origin:left 17px;">Tétel megjegyzések másolása</div>
<div class="cl" style="left:973.20px;top:0;width:151.00px;height:1118px"><div class="t" style="left:22.00px;top:1031.80px;font-size:20px;transform:scale(0.8584,0.94);transform-origin:left 17px;color:#161616">Mindent kijelöl</div></div>
<div class="cl" style="left:1134.80px;top:0;width:151.00px;height:1118px"><div class="t" style="left:20.40px;top:1031.80px;font-size:20px;transform:scale(0.8801,0.94);transform-origin:left 17px;color:#161616">Kijelölést töröl</div></div>
<div class="cl" style="left:1334.80px;top:0;width:151.60px;height:1118px"><div class="t" style="left:33.00px;top:1031.40px;font-size:20px;transform:scale(0.8694,0.94);transform-origin:left 17px;color:#161616">Teljes bizonylat</div></div>
<div class="cl" style="left:1496.20px;top:0;width:150.80px;height:1118px"><div class="t" style="left:35.40px;top:1031.40px;font-size:20px;transform:scale(0.8849,0.94);transform-origin:left 17px;color:#161616">Bizonylat tétel</div></div>
<div class="cl" style="left:1657.00px;top:0;width:115.20px;height:1118px"><div class="t" style="left:39.80px;top:1031.40px;font-size:20px;transform:scale(0.8264,0.94);transform-origin:left 17px;color:#161616">Mégsem</div></div>
<div class="t" style="left:16.00px;top:1081.20px;font-size:20px;transform:scale(0.9190,0.94);transform-origin:left 17px;color:#161616">Alt+K - Szűrés; Alt+T - Tételek; F9 - Sor/mező kijelölés; ENTER - Választás; ESC - Mégsem</div></div>
</body></html>
